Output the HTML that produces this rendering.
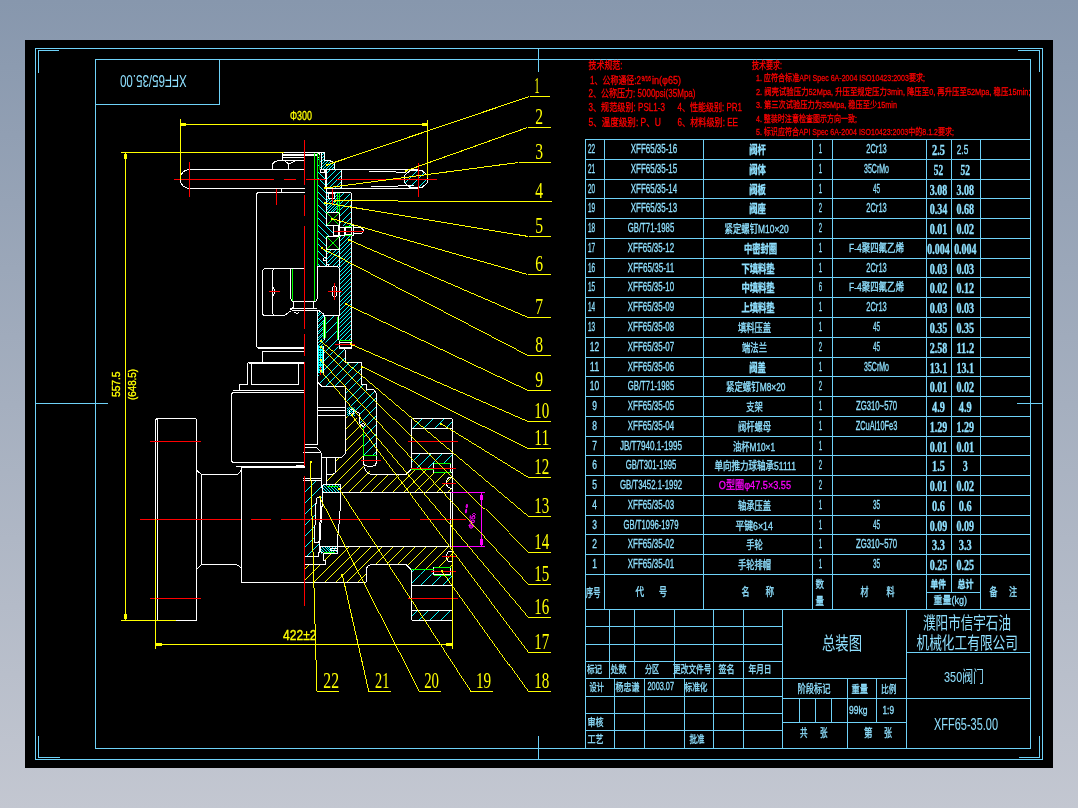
<!DOCTYPE html>
<html lang="zh"><head><meta charset="utf-8"><title>XFF65-35.00 总装图</title>
<style>
html,body{margin:0;padding:0;width:1078px;height:808px;overflow:hidden;background:#a3adbf}
svg{display:block;font-family:"Liberation Sans", "Noto Sans CJK SC", sans-serif}
body{will-change:transform}
</style></head><body>
<svg width="1078" height="808" viewBox="0 0 1078 808" shape-rendering="crispEdges">
<defs><linearGradient id="bg" x1="0" y1="0" x2="0" y2="1"><stop offset="0" stop-color="#8797ad"/><stop offset="1" stop-color="#c3c7d1"/></linearGradient></defs>
<rect x="0" y="0" width="1078" height="808" fill="url(#bg)"/>
<rect x="25" y="40" width="1028" height="728" rx="1.5" fill="#000"/>
<g id="frame">
<rect x="35.5" y="48.5" width="1007" height="711" fill="none" stroke="#6fd2f8"/>
<rect x="95.5" y="59.5" width="935" height="689" fill="none" stroke="#6fd2f8"/>
<line x1="95" y1="104.5" x2="220" y2="104.5" stroke="#6fd2f8" stroke-width="1" />
<line x1="219.5" y1="59" x2="219.5" y2="105" stroke="#6fd2f8" stroke-width="1" />
<line x1="38" y1="50.5" x2="59" y2="50.5" stroke="#6fd2f8" stroke-width="1" />
<line x1="38.5" y1="50" x2="38.5" y2="73" stroke="#6fd2f8" stroke-width="1" />
<line x1="1019" y1="757.5" x2="1040" y2="757.5" stroke="#6fd2f8" stroke-width="1" />
<line x1="1039.5" y1="736" x2="1039.5" y2="758" stroke="#6fd2f8" stroke-width="1" />
<line x1="1018" y1="50.5" x2="1040" y2="50.5" stroke="#6fd2f8" stroke-width="1" />
<line x1="1039.5" y1="50" x2="1039.5" y2="72" stroke="#6fd2f8" stroke-width="1" />
<line x1="538.5" y1="48" x2="538.5" y2="72" stroke="#6fd2f8" stroke-width="1" />
<line x1="35" y1="403.5" x2="108" y2="403.5" stroke="#6fd2f8" stroke-width="1" />
<line x1="1017" y1="403.5" x2="1042" y2="403.5" stroke="#6fd2f8" stroke-width="1" />
</g>
<g id="frame2">
<line x1="38" y1="757.5" x2="60" y2="757.5" stroke="#6fd2f8" stroke-width="1" />
<line x1="38.5" y1="736" x2="38.5" y2="758" stroke="#6fd2f8" stroke-width="1" />
<line x1="538.5" y1="736" x2="538.5" y2="759" stroke="#6fd2f8" stroke-width="1" />
</g>
<g id="table">
<line x1="585" y1="139.5" x2="1031" y2="139.5" stroke="#6fd2f8" stroke-width="1" />
<line x1="585" y1="159.5" x2="1031" y2="159.5" stroke="#6fd2f8" stroke-width="1" />
<line x1="585" y1="179.5" x2="1031" y2="179.5" stroke="#6fd2f8" stroke-width="1" />
<line x1="585" y1="198.5" x2="1031" y2="198.5" stroke="#6fd2f8" stroke-width="1" />
<line x1="585" y1="218.5" x2="1031" y2="218.5" stroke="#6fd2f8" stroke-width="1" />
<line x1="585" y1="238.5" x2="1031" y2="238.5" stroke="#6fd2f8" stroke-width="1" />
<line x1="585" y1="258.5" x2="1031" y2="258.5" stroke="#6fd2f8" stroke-width="1" />
<line x1="585" y1="277.5" x2="1031" y2="277.5" stroke="#6fd2f8" stroke-width="1" />
<line x1="585" y1="297.5" x2="1031" y2="297.5" stroke="#6fd2f8" stroke-width="1" />
<line x1="585" y1="317.5" x2="1031" y2="317.5" stroke="#6fd2f8" stroke-width="1" />
<line x1="585" y1="337.5" x2="1031" y2="337.5" stroke="#6fd2f8" stroke-width="1" />
<line x1="585" y1="357.5" x2="1031" y2="357.5" stroke="#6fd2f8" stroke-width="1" />
<line x1="585" y1="376.5" x2="1031" y2="376.5" stroke="#6fd2f8" stroke-width="1" />
<line x1="585" y1="396.5" x2="1031" y2="396.5" stroke="#6fd2f8" stroke-width="1" />
<line x1="585" y1="416.5" x2="1031" y2="416.5" stroke="#6fd2f8" stroke-width="1" />
<line x1="585" y1="436.5" x2="1031" y2="436.5" stroke="#6fd2f8" stroke-width="1" />
<line x1="585" y1="455.5" x2="1031" y2="455.5" stroke="#6fd2f8" stroke-width="1" />
<line x1="585" y1="475.5" x2="1031" y2="475.5" stroke="#6fd2f8" stroke-width="1" />
<line x1="585" y1="495.5" x2="1031" y2="495.5" stroke="#6fd2f8" stroke-width="1" />
<line x1="585" y1="515.5" x2="1031" y2="515.5" stroke="#6fd2f8" stroke-width="1" />
<line x1="585" y1="534.5" x2="1031" y2="534.5" stroke="#6fd2f8" stroke-width="1" />
<line x1="585" y1="554.5" x2="1031" y2="554.5" stroke="#6fd2f8" stroke-width="1" />
<line x1="585" y1="574.5" x2="1031" y2="574.5" stroke="#6fd2f8" stroke-width="1" />
<line x1="585.5" y1="139" x2="585.5" y2="609" stroke="#6fd2f8" stroke-width="1" />
<line x1="604.5" y1="139" x2="604.5" y2="609" stroke="#6fd2f8" stroke-width="1" />
<line x1="703.5" y1="139" x2="703.5" y2="609" stroke="#6fd2f8" stroke-width="1" />
<line x1="812.5" y1="139" x2="812.5" y2="609" stroke="#6fd2f8" stroke-width="1" />
<line x1="832.5" y1="139" x2="832.5" y2="609" stroke="#6fd2f8" stroke-width="1" />
<line x1="926.5" y1="139" x2="926.5" y2="609" stroke="#6fd2f8" stroke-width="1" />
<line x1="951.5" y1="139" x2="951.5" y2="609" stroke="#6fd2f8" stroke-width="1" />
<line x1="980.5" y1="139" x2="980.5" y2="609" stroke="#6fd2f8" stroke-width="1" />
<line x1="585" y1="609.5" x2="1031" y2="609.5" stroke="#6fd2f8" stroke-width="1" />
<rect x="950" y="593" width="3" height="16" fill="#000"/>
<line x1="926" y1="592.5" x2="981" y2="592.5" stroke="#6fd2f8" stroke-width="1" />
<text x="588" y="153" font-size="12.4" fill="#8fe0ff" stroke="#8fe0ff" stroke-width="0.3" text-anchor="start" textLength="7.2" lengthAdjust="spacingAndGlyphs" >22</text>
<text x="630.79" y="153" font-size="12.4" fill="#8fe0ff" stroke="#8fe0ff" stroke-width="0.3" text-anchor="start" textLength="46.419999999999995" lengthAdjust="spacingAndGlyphs" >XFF65/35-16</text>
<text x="749.3000000000001" y="153.5" font-size="10.912" fill="#8fe0ff" stroke="#8fe0ff" stroke-width="0.3" text-anchor="start" textLength="16.6" lengthAdjust="spacingAndGlyphs" font-weight="bold" >阀杆</text>
<text x="818.85" y="153" font-size="12.4" fill="#8fe0ff" stroke="#8fe0ff" stroke-width="0.3" text-anchor="start" textLength="3.3" lengthAdjust="spacingAndGlyphs" >1</text>
<text x="866.25" y="153" font-size="12.4" fill="#8fe0ff" stroke="#8fe0ff" stroke-width="0.3" text-anchor="start" textLength="20.5" lengthAdjust="spacingAndGlyphs" >2Cr13</text>
<text x="932.0375" y="155.3" font-size="13.6" fill="#8fe0ff" stroke="#8fe0ff" stroke-width="0.3" text-anchor="start" textLength="12.925" lengthAdjust="spacingAndGlyphs" font-weight="bold" font-family="Liberation Serif, serif">2.5</text>
<text x="956.75" y="154" font-size="12.4" fill="#8fe0ff" stroke="#8fe0ff" stroke-width="0.3" text-anchor="start" textLength="11.5" lengthAdjust="spacingAndGlyphs" >2.5</text>
<text x="588" y="173" font-size="12.4" fill="#8fe0ff" stroke="#8fe0ff" stroke-width="0.3" text-anchor="start" textLength="7.2" lengthAdjust="spacingAndGlyphs" >21</text>
<text x="630.79" y="173" font-size="12.4" fill="#8fe0ff" stroke="#8fe0ff" stroke-width="0.3" text-anchor="start" textLength="46.419999999999995" lengthAdjust="spacingAndGlyphs" >XFF65/35-15</text>
<text x="749.3000000000001" y="173.5" font-size="10.912" fill="#8fe0ff" stroke="#8fe0ff" stroke-width="0.3" text-anchor="start" textLength="16.6" lengthAdjust="spacingAndGlyphs" font-weight="bold" >阀体</text>
<text x="818.85" y="173" font-size="12.4" fill="#8fe0ff" stroke="#8fe0ff" stroke-width="0.3" text-anchor="start" textLength="3.3" lengthAdjust="spacingAndGlyphs" >1</text>
<text x="864.0" y="173" font-size="12.4" fill="#8fe0ff" stroke="#8fe0ff" stroke-width="0.3" text-anchor="start" textLength="25" lengthAdjust="spacingAndGlyphs" >35CrMo</text>
<text x="933.8" y="175.3" font-size="13.6" fill="#8fe0ff" stroke="#8fe0ff" stroke-width="0.3" text-anchor="start" textLength="9.4" lengthAdjust="spacingAndGlyphs" font-weight="bold" font-family="Liberation Serif, serif">52</text>
<text x="960.5999999999999" y="175.3" font-size="13.6" fill="#8fe0ff" stroke="#8fe0ff" stroke-width="0.3" text-anchor="start" textLength="9.4" lengthAdjust="spacingAndGlyphs" font-weight="bold" font-family="Liberation Serif, serif">52</text>
<text x="588" y="193" font-size="12.4" fill="#8fe0ff" stroke="#8fe0ff" stroke-width="0.3" text-anchor="start" textLength="7.2" lengthAdjust="spacingAndGlyphs" >20</text>
<text x="630.79" y="193" font-size="12.4" fill="#8fe0ff" stroke="#8fe0ff" stroke-width="0.3" text-anchor="start" textLength="46.419999999999995" lengthAdjust="spacingAndGlyphs" >XFF65/35-14</text>
<text x="749.3000000000001" y="193.5" font-size="10.912" fill="#8fe0ff" stroke="#8fe0ff" stroke-width="0.3" text-anchor="start" textLength="16.6" lengthAdjust="spacingAndGlyphs" font-weight="bold" >阀板</text>
<text x="818.85" y="193" font-size="12.4" fill="#8fe0ff" stroke="#8fe0ff" stroke-width="0.3" text-anchor="start" textLength="3.3" lengthAdjust="spacingAndGlyphs" >1</text>
<text x="873.0" y="193" font-size="12.4" fill="#8fe0ff" stroke="#8fe0ff" stroke-width="0.3" text-anchor="start" textLength="7" lengthAdjust="spacingAndGlyphs" >45</text>
<text x="929.6875" y="195.3" font-size="13.6" fill="#8fe0ff" stroke="#8fe0ff" stroke-width="0.3" text-anchor="start" textLength="17.625" lengthAdjust="spacingAndGlyphs" font-weight="bold" font-family="Liberation Serif, serif">3.08</text>
<text x="956.4875" y="195.3" font-size="13.6" fill="#8fe0ff" stroke="#8fe0ff" stroke-width="0.3" text-anchor="start" textLength="17.625" lengthAdjust="spacingAndGlyphs" font-weight="bold" font-family="Liberation Serif, serif">3.08</text>
<text x="588" y="212" font-size="12.4" fill="#8fe0ff" stroke="#8fe0ff" stroke-width="0.3" text-anchor="start" textLength="7.2" lengthAdjust="spacingAndGlyphs" >19</text>
<text x="630.79" y="212" font-size="12.4" fill="#8fe0ff" stroke="#8fe0ff" stroke-width="0.3" text-anchor="start" textLength="46.419999999999995" lengthAdjust="spacingAndGlyphs" >XFF65/35-13</text>
<text x="749.3000000000001" y="212.5" font-size="10.912" fill="#8fe0ff" stroke="#8fe0ff" stroke-width="0.3" text-anchor="start" textLength="16.6" lengthAdjust="spacingAndGlyphs" font-weight="bold" >阀座</text>
<text x="818.85" y="212" font-size="12.4" fill="#8fe0ff" stroke="#8fe0ff" stroke-width="0.3" text-anchor="start" textLength="3.3" lengthAdjust="spacingAndGlyphs" >2</text>
<text x="866.25" y="212" font-size="12.4" fill="#8fe0ff" stroke="#8fe0ff" stroke-width="0.3" text-anchor="start" textLength="20.5" lengthAdjust="spacingAndGlyphs" >2Cr13</text>
<text x="929.6875" y="214.3" font-size="13.6" fill="#8fe0ff" stroke="#8fe0ff" stroke-width="0.3" text-anchor="start" textLength="17.625" lengthAdjust="spacingAndGlyphs" font-weight="bold" font-family="Liberation Serif, serif">0.34</text>
<text x="956.4875" y="214.3" font-size="13.6" fill="#8fe0ff" stroke="#8fe0ff" stroke-width="0.3" text-anchor="start" textLength="17.625" lengthAdjust="spacingAndGlyphs" font-weight="bold" font-family="Liberation Serif, serif">0.68</text>
<text x="588" y="232" font-size="12.4" fill="#8fe0ff" stroke="#8fe0ff" stroke-width="0.3" text-anchor="start" textLength="7.2" lengthAdjust="spacingAndGlyphs" >18</text>
<text x="627.79" y="232" font-size="12.4" fill="#8fe0ff" stroke="#8fe0ff" stroke-width="0.3" text-anchor="start" textLength="46.419999999999995" lengthAdjust="spacingAndGlyphs" >GB/T71-1985</text>
<text x="724.5" y="232.5" font-size="10.912" fill="#8fe0ff" stroke="#8fe0ff" stroke-width="0.3" text-anchor="start" textLength="64.2" lengthAdjust="spacingAndGlyphs" >紧定螺钉M10×20</text>
<text x="818.85" y="232" font-size="12.4" fill="#8fe0ff" stroke="#8fe0ff" stroke-width="0.3" text-anchor="start" textLength="3.3" lengthAdjust="spacingAndGlyphs" >2</text>
<text x="929.6875" y="234.3" font-size="13.6" fill="#8fe0ff" stroke="#8fe0ff" stroke-width="0.3" text-anchor="start" textLength="17.625" lengthAdjust="spacingAndGlyphs" font-weight="bold" font-family="Liberation Serif, serif">0.01</text>
<text x="956.4875" y="234.3" font-size="13.6" fill="#8fe0ff" stroke="#8fe0ff" stroke-width="0.3" text-anchor="start" textLength="17.625" lengthAdjust="spacingAndGlyphs" font-weight="bold" font-family="Liberation Serif, serif">0.02</text>
<text x="588" y="252" font-size="12.4" fill="#8fe0ff" stroke="#8fe0ff" stroke-width="0.3" text-anchor="start" textLength="7.2" lengthAdjust="spacingAndGlyphs" >17</text>
<text x="627.79" y="252" font-size="12.4" fill="#8fe0ff" stroke="#8fe0ff" stroke-width="0.3" text-anchor="start" textLength="46.419999999999995" lengthAdjust="spacingAndGlyphs" >XFF65/35-12</text>
<text x="743.9" y="252.5" font-size="10.912" fill="#8fe0ff" stroke="#8fe0ff" stroke-width="0.3" text-anchor="start" textLength="33.2" lengthAdjust="spacingAndGlyphs" font-weight="bold" >中密封圈</text>
<text x="818.85" y="252" font-size="12.4" fill="#8fe0ff" stroke="#8fe0ff" stroke-width="0.3" text-anchor="start" textLength="3.3" lengthAdjust="spacingAndGlyphs" >1</text>
<text x="849.0" y="252" font-size="11.16" fill="#8fe0ff" stroke="#8fe0ff" stroke-width="0.3" text-anchor="start" textLength="55" lengthAdjust="spacingAndGlyphs" >F-4聚四氟乙烯</text>
<text x="927.3375" y="254.3" font-size="13.6" fill="#8fe0ff" stroke="#8fe0ff" stroke-width="0.3" text-anchor="start" textLength="22.325" lengthAdjust="spacingAndGlyphs" font-weight="bold" font-family="Liberation Serif, serif">0.004</text>
<text x="954.1374999999999" y="254.3" font-size="13.6" fill="#8fe0ff" stroke="#8fe0ff" stroke-width="0.3" text-anchor="start" textLength="22.325" lengthAdjust="spacingAndGlyphs" font-weight="bold" font-family="Liberation Serif, serif">0.004</text>
<text x="588" y="272" font-size="12.4" fill="#8fe0ff" stroke="#8fe0ff" stroke-width="0.3" text-anchor="start" textLength="7.2" lengthAdjust="spacingAndGlyphs" >16</text>
<text x="627.79" y="272" font-size="12.4" fill="#8fe0ff" stroke="#8fe0ff" stroke-width="0.3" text-anchor="start" textLength="46.419999999999995" lengthAdjust="spacingAndGlyphs" >XFF65/35-11</text>
<text x="741.4" y="272.5" font-size="10.912" fill="#8fe0ff" stroke="#8fe0ff" stroke-width="0.3" text-anchor="start" textLength="33.2" lengthAdjust="spacingAndGlyphs" font-weight="bold" >下填料垫</text>
<text x="818.85" y="272" font-size="12.4" fill="#8fe0ff" stroke="#8fe0ff" stroke-width="0.3" text-anchor="start" textLength="3.3" lengthAdjust="spacingAndGlyphs" >1</text>
<text x="866.25" y="272" font-size="12.4" fill="#8fe0ff" stroke="#8fe0ff" stroke-width="0.3" text-anchor="start" textLength="20.5" lengthAdjust="spacingAndGlyphs" >2Cr13</text>
<text x="929.6875" y="274.3" font-size="13.6" fill="#8fe0ff" stroke="#8fe0ff" stroke-width="0.3" text-anchor="start" textLength="17.625" lengthAdjust="spacingAndGlyphs" font-weight="bold" font-family="Liberation Serif, serif">0.03</text>
<text x="956.4875" y="274.3" font-size="13.6" fill="#8fe0ff" stroke="#8fe0ff" stroke-width="0.3" text-anchor="start" textLength="17.625" lengthAdjust="spacingAndGlyphs" font-weight="bold" font-family="Liberation Serif, serif">0.03</text>
<text x="588" y="291" font-size="12.4" fill="#8fe0ff" stroke="#8fe0ff" stroke-width="0.3" text-anchor="start" textLength="7.2" lengthAdjust="spacingAndGlyphs" >15</text>
<text x="627.79" y="291" font-size="12.4" fill="#8fe0ff" stroke="#8fe0ff" stroke-width="0.3" text-anchor="start" textLength="46.419999999999995" lengthAdjust="spacingAndGlyphs" >XFF65/35-10</text>
<text x="741.4" y="291.5" font-size="10.912" fill="#8fe0ff" stroke="#8fe0ff" stroke-width="0.3" text-anchor="start" textLength="33.2" lengthAdjust="spacingAndGlyphs" font-weight="bold" >中填料垫</text>
<text x="818.85" y="291" font-size="12.4" fill="#8fe0ff" stroke="#8fe0ff" stroke-width="0.3" text-anchor="start" textLength="3.3" lengthAdjust="spacingAndGlyphs" >6</text>
<text x="849.0" y="291" font-size="11.16" fill="#8fe0ff" stroke="#8fe0ff" stroke-width="0.3" text-anchor="start" textLength="55" lengthAdjust="spacingAndGlyphs" >F-4聚四氟乙烯</text>
<text x="929.6875" y="293.3" font-size="13.6" fill="#8fe0ff" stroke="#8fe0ff" stroke-width="0.3" text-anchor="start" textLength="17.625" lengthAdjust="spacingAndGlyphs" font-weight="bold" font-family="Liberation Serif, serif">0.02</text>
<text x="956.4875" y="293.3" font-size="13.6" fill="#8fe0ff" stroke="#8fe0ff" stroke-width="0.3" text-anchor="start" textLength="17.625" lengthAdjust="spacingAndGlyphs" font-weight="bold" font-family="Liberation Serif, serif">0.12</text>
<text x="588" y="311" font-size="12.4" fill="#8fe0ff" stroke="#8fe0ff" stroke-width="0.3" text-anchor="start" textLength="7.2" lengthAdjust="spacingAndGlyphs" >14</text>
<text x="627.79" y="311" font-size="12.4" fill="#8fe0ff" stroke="#8fe0ff" stroke-width="0.3" text-anchor="start" textLength="46.419999999999995" lengthAdjust="spacingAndGlyphs" >XFF65/35-09</text>
<text x="741.4" y="311.5" font-size="10.912" fill="#8fe0ff" stroke="#8fe0ff" stroke-width="0.3" text-anchor="start" textLength="33.2" lengthAdjust="spacingAndGlyphs" font-weight="bold" >上填料垫</text>
<text x="818.85" y="311" font-size="12.4" fill="#8fe0ff" stroke="#8fe0ff" stroke-width="0.3" text-anchor="start" textLength="3.3" lengthAdjust="spacingAndGlyphs" >1</text>
<text x="866.25" y="311" font-size="12.4" fill="#8fe0ff" stroke="#8fe0ff" stroke-width="0.3" text-anchor="start" textLength="20.5" lengthAdjust="spacingAndGlyphs" >2Cr13</text>
<text x="929.6875" y="313.3" font-size="13.6" fill="#8fe0ff" stroke="#8fe0ff" stroke-width="0.3" text-anchor="start" textLength="17.625" lengthAdjust="spacingAndGlyphs" font-weight="bold" font-family="Liberation Serif, serif">0.03</text>
<text x="956.4875" y="313.3" font-size="13.6" fill="#8fe0ff" stroke="#8fe0ff" stroke-width="0.3" text-anchor="start" textLength="17.625" lengthAdjust="spacingAndGlyphs" font-weight="bold" font-family="Liberation Serif, serif">0.03</text>
<text x="588" y="331" font-size="12.4" fill="#8fe0ff" stroke="#8fe0ff" stroke-width="0.3" text-anchor="start" textLength="7.2" lengthAdjust="spacingAndGlyphs" >13</text>
<text x="627.79" y="331" font-size="12.4" fill="#8fe0ff" stroke="#8fe0ff" stroke-width="0.3" text-anchor="start" textLength="46.419999999999995" lengthAdjust="spacingAndGlyphs" >XFF65/35-08</text>
<text x="737.9" y="331.5" font-size="10.912" fill="#8fe0ff" stroke="#8fe0ff" stroke-width="0.3" text-anchor="start" textLength="33.2" lengthAdjust="spacingAndGlyphs" >填料压盖</text>
<text x="818.85" y="331" font-size="12.4" fill="#8fe0ff" stroke="#8fe0ff" stroke-width="0.3" text-anchor="start" textLength="3.3" lengthAdjust="spacingAndGlyphs" >1</text>
<text x="873.0" y="331" font-size="12.4" fill="#8fe0ff" stroke="#8fe0ff" stroke-width="0.3" text-anchor="start" textLength="7" lengthAdjust="spacingAndGlyphs" >45</text>
<text x="929.6875" y="333.3" font-size="13.6" fill="#8fe0ff" stroke="#8fe0ff" stroke-width="0.3" text-anchor="start" textLength="17.625" lengthAdjust="spacingAndGlyphs" font-weight="bold" font-family="Liberation Serif, serif">0.35</text>
<text x="956.4875" y="333.3" font-size="13.6" fill="#8fe0ff" stroke="#8fe0ff" stroke-width="0.3" text-anchor="start" textLength="17.625" lengthAdjust="spacingAndGlyphs" font-weight="bold" font-family="Liberation Serif, serif">0.35</text>
<text x="589.8" y="351" font-size="12.4" fill="#8fe0ff" stroke="#8fe0ff" stroke-width="0.3" text-anchor="start" textLength="9.4" lengthAdjust="spacingAndGlyphs" >12</text>
<text x="627.79" y="351" font-size="12.4" fill="#8fe0ff" stroke="#8fe0ff" stroke-width="0.3" text-anchor="start" textLength="46.419999999999995" lengthAdjust="spacingAndGlyphs" >XFF65/35-07</text>
<text x="742.05" y="351.5" font-size="10.912" fill="#8fe0ff" stroke="#8fe0ff" stroke-width="0.3" text-anchor="start" textLength="24.900000000000002" lengthAdjust="spacingAndGlyphs" >端法兰</text>
<text x="818.85" y="351" font-size="12.4" fill="#8fe0ff" stroke="#8fe0ff" stroke-width="0.3" text-anchor="start" textLength="3.3" lengthAdjust="spacingAndGlyphs" >2</text>
<text x="873.0" y="351" font-size="12.4" fill="#8fe0ff" stroke="#8fe0ff" stroke-width="0.3" text-anchor="start" textLength="7" lengthAdjust="spacingAndGlyphs" >45</text>
<text x="929.6875" y="353.3" font-size="13.6" fill="#8fe0ff" stroke="#8fe0ff" stroke-width="0.3" text-anchor="start" textLength="17.625" lengthAdjust="spacingAndGlyphs" font-weight="bold" font-family="Liberation Serif, serif">2.58</text>
<text x="956.4875" y="353.3" font-size="13.6" fill="#8fe0ff" stroke="#8fe0ff" stroke-width="0.3" text-anchor="start" textLength="17.625" lengthAdjust="spacingAndGlyphs" font-weight="bold" font-family="Liberation Serif, serif">11.2</text>
<text x="589.8" y="371" font-size="12.4" fill="#8fe0ff" stroke="#8fe0ff" stroke-width="0.3" text-anchor="start" textLength="9.4" lengthAdjust="spacingAndGlyphs" >11</text>
<text x="627.79" y="371" font-size="12.4" fill="#8fe0ff" stroke="#8fe0ff" stroke-width="0.3" text-anchor="start" textLength="46.419999999999995" lengthAdjust="spacingAndGlyphs" >XFF65/35-06</text>
<text x="749.3000000000001" y="371.5" font-size="10.912" fill="#8fe0ff" stroke="#8fe0ff" stroke-width="0.3" text-anchor="start" textLength="16.6" lengthAdjust="spacingAndGlyphs" font-weight="bold" >阀盖</text>
<text x="818.85" y="371" font-size="12.4" fill="#8fe0ff" stroke="#8fe0ff" stroke-width="0.3" text-anchor="start" textLength="3.3" lengthAdjust="spacingAndGlyphs" >1</text>
<text x="864.0" y="371" font-size="12.4" fill="#8fe0ff" stroke="#8fe0ff" stroke-width="0.3" text-anchor="start" textLength="25" lengthAdjust="spacingAndGlyphs" >35CrMo</text>
<text x="929.6875" y="373.3" font-size="13.6" fill="#8fe0ff" stroke="#8fe0ff" stroke-width="0.3" text-anchor="start" textLength="17.625" lengthAdjust="spacingAndGlyphs" font-weight="bold" font-family="Liberation Serif, serif">13.1</text>
<text x="956.4875" y="373.3" font-size="13.6" fill="#8fe0ff" stroke="#8fe0ff" stroke-width="0.3" text-anchor="start" textLength="17.625" lengthAdjust="spacingAndGlyphs" font-weight="bold" font-family="Liberation Serif, serif">13.1</text>
<text x="589.8" y="390" font-size="12.4" fill="#8fe0ff" stroke="#8fe0ff" stroke-width="0.3" text-anchor="start" textLength="9.4" lengthAdjust="spacingAndGlyphs" >10</text>
<text x="627.79" y="390" font-size="12.4" fill="#8fe0ff" stroke="#8fe0ff" stroke-width="0.3" text-anchor="start" textLength="46.419999999999995" lengthAdjust="spacingAndGlyphs" >GB/T71-1985</text>
<text x="726.05" y="390.5" font-size="10.912" fill="#8fe0ff" stroke="#8fe0ff" stroke-width="0.3" text-anchor="start" textLength="59.5" lengthAdjust="spacingAndGlyphs" >紧定螺钉M8×20</text>
<text x="818.85" y="390" font-size="12.4" fill="#8fe0ff" stroke="#8fe0ff" stroke-width="0.3" text-anchor="start" textLength="3.3" lengthAdjust="spacingAndGlyphs" >2</text>
<text x="929.6875" y="392.3" font-size="13.6" fill="#8fe0ff" stroke="#8fe0ff" stroke-width="0.3" text-anchor="start" textLength="17.625" lengthAdjust="spacingAndGlyphs" font-weight="bold" font-family="Liberation Serif, serif">0.01</text>
<text x="956.4875" y="392.3" font-size="13.6" fill="#8fe0ff" stroke="#8fe0ff" stroke-width="0.3" text-anchor="start" textLength="17.625" lengthAdjust="spacingAndGlyphs" font-weight="bold" font-family="Liberation Serif, serif">0.02</text>
<text x="592.15" y="410" font-size="12.4" fill="#8fe0ff" stroke="#8fe0ff" stroke-width="0.3" text-anchor="start" textLength="4.7" lengthAdjust="spacingAndGlyphs" >9</text>
<text x="627.79" y="410" font-size="12.4" fill="#8fe0ff" stroke="#8fe0ff" stroke-width="0.3" text-anchor="start" textLength="46.419999999999995" lengthAdjust="spacingAndGlyphs" >XFF65/35-05</text>
<text x="746.2" y="410.5" font-size="10.912" fill="#8fe0ff" stroke="#8fe0ff" stroke-width="0.3" text-anchor="start" textLength="16.6" lengthAdjust="spacingAndGlyphs" >支架</text>
<text x="818.85" y="410" font-size="12.4" fill="#8fe0ff" stroke="#8fe0ff" stroke-width="0.3" text-anchor="start" textLength="3.3" lengthAdjust="spacingAndGlyphs" >1</text>
<text x="855.9" y="410" font-size="12.4" fill="#8fe0ff" stroke="#8fe0ff" stroke-width="0.3" text-anchor="start" textLength="41.2" lengthAdjust="spacingAndGlyphs" >ZG310~570</text>
<text x="932.0375" y="412.3" font-size="13.6" fill="#8fe0ff" stroke="#8fe0ff" stroke-width="0.3" text-anchor="start" textLength="12.925" lengthAdjust="spacingAndGlyphs" font-weight="bold" font-family="Liberation Serif, serif">4.9</text>
<text x="958.8375" y="412.3" font-size="13.6" fill="#8fe0ff" stroke="#8fe0ff" stroke-width="0.3" text-anchor="start" textLength="12.925" lengthAdjust="spacingAndGlyphs" font-weight="bold" font-family="Liberation Serif, serif">4.9</text>
<text x="592.15" y="430" font-size="12.4" fill="#8fe0ff" stroke="#8fe0ff" stroke-width="0.3" text-anchor="start" textLength="4.7" lengthAdjust="spacingAndGlyphs" >8</text>
<text x="627.79" y="430" font-size="12.4" fill="#8fe0ff" stroke="#8fe0ff" stroke-width="0.3" text-anchor="start" textLength="46.419999999999995" lengthAdjust="spacingAndGlyphs" >XFF65/35-04</text>
<text x="737.9" y="430.5" font-size="10.912" fill="#8fe0ff" stroke="#8fe0ff" stroke-width="0.3" text-anchor="start" textLength="33.2" lengthAdjust="spacingAndGlyphs" >阀杆螺母</text>
<text x="818.85" y="430" font-size="12.4" fill="#8fe0ff" stroke="#8fe0ff" stroke-width="0.3" text-anchor="start" textLength="3.3" lengthAdjust="spacingAndGlyphs" >1</text>
<text x="855.65" y="430" font-size="12.4" fill="#8fe0ff" stroke="#8fe0ff" stroke-width="0.3" text-anchor="start" textLength="41.7" lengthAdjust="spacingAndGlyphs" >ZCuAl10Fe3</text>
<text x="929.6875" y="432.3" font-size="13.6" fill="#8fe0ff" stroke="#8fe0ff" stroke-width="0.3" text-anchor="start" textLength="17.625" lengthAdjust="spacingAndGlyphs" font-weight="bold" font-family="Liberation Serif, serif">1.29</text>
<text x="956.4875" y="432.3" font-size="13.6" fill="#8fe0ff" stroke="#8fe0ff" stroke-width="0.3" text-anchor="start" textLength="17.625" lengthAdjust="spacingAndGlyphs" font-weight="bold" font-family="Liberation Serif, serif">1.29</text>
<text x="592.15" y="450" font-size="12.4" fill="#8fe0ff" stroke="#8fe0ff" stroke-width="0.3" text-anchor="start" textLength="4.7" lengthAdjust="spacingAndGlyphs" >7</text>
<text x="619.8775" y="450" font-size="12.4" fill="#8fe0ff" stroke="#8fe0ff" stroke-width="0.3" text-anchor="start" textLength="62.24499999999999" lengthAdjust="spacingAndGlyphs" >JB/T7940.1-1995</text>
<text x="733.0" y="450.5" font-size="10.912" fill="#8fe0ff" stroke="#8fe0ff" stroke-width="0.3" text-anchor="start" textLength="42" lengthAdjust="spacingAndGlyphs" >油杯M10×1</text>
<text x="818.85" y="450" font-size="12.4" fill="#8fe0ff" stroke="#8fe0ff" stroke-width="0.3" text-anchor="start" textLength="3.3" lengthAdjust="spacingAndGlyphs" >1</text>
<text x="929.6875" y="452.3" font-size="13.6" fill="#8fe0ff" stroke="#8fe0ff" stroke-width="0.3" text-anchor="start" textLength="17.625" lengthAdjust="spacingAndGlyphs" font-weight="bold" font-family="Liberation Serif, serif">0.01</text>
<text x="956.4875" y="452.3" font-size="13.6" fill="#8fe0ff" stroke="#8fe0ff" stroke-width="0.3" text-anchor="start" textLength="17.625" lengthAdjust="spacingAndGlyphs" font-weight="bold" font-family="Liberation Serif, serif">0.01</text>
<text x="592.15" y="469" font-size="12.4" fill="#8fe0ff" stroke="#8fe0ff" stroke-width="0.3" text-anchor="start" textLength="4.7" lengthAdjust="spacingAndGlyphs" >6</text>
<text x="625.68" y="469" font-size="12.4" fill="#8fe0ff" stroke="#8fe0ff" stroke-width="0.3" text-anchor="start" textLength="50.63999999999999" lengthAdjust="spacingAndGlyphs" >GB/T301-1995</text>
<text x="714.45" y="469.5" font-size="10.912" fill="#8fe0ff" stroke="#8fe0ff" stroke-width="0.3" text-anchor="start" textLength="81.5" lengthAdjust="spacingAndGlyphs" >单向推力球轴承51111</text>
<text x="818.85" y="469" font-size="12.4" fill="#8fe0ff" stroke="#8fe0ff" stroke-width="0.3" text-anchor="start" textLength="3.3" lengthAdjust="spacingAndGlyphs" >2</text>
<text x="932.0375" y="471.3" font-size="13.6" fill="#8fe0ff" stroke="#8fe0ff" stroke-width="0.3" text-anchor="start" textLength="12.925" lengthAdjust="spacingAndGlyphs" font-weight="bold" font-family="Liberation Serif, serif">1.5</text>
<text x="962.9499999999999" y="471.3" font-size="13.6" fill="#8fe0ff" stroke="#8fe0ff" stroke-width="0.3" text-anchor="start" textLength="4.7" lengthAdjust="spacingAndGlyphs" font-weight="bold" font-family="Liberation Serif, serif">3</text>
<text x="592.15" y="489" font-size="12.4" fill="#8fe0ff" stroke="#8fe0ff" stroke-width="0.3" text-anchor="start" textLength="4.7" lengthAdjust="spacingAndGlyphs" >5</text>
<text x="619.8775" y="489" font-size="12.4" fill="#8fe0ff" stroke="#8fe0ff" stroke-width="0.3" text-anchor="start" textLength="62.24499999999999" lengthAdjust="spacingAndGlyphs" >GB/T3452.1-1992</text>
<text x="718.8" y="489" font-size="11.16" fill="#ff00ff" stroke="#ff00ff" stroke-width="0.3" text-anchor="start" textLength="72.2" lengthAdjust="spacingAndGlyphs" >O型圈φ47.5×3.55</text>
<text x="818.85" y="489" font-size="12.4" fill="#8fe0ff" stroke="#8fe0ff" stroke-width="0.3" text-anchor="start" textLength="3.3" lengthAdjust="spacingAndGlyphs" >2</text>
<text x="929.6875" y="491.3" font-size="13.6" fill="#8fe0ff" stroke="#8fe0ff" stroke-width="0.3" text-anchor="start" textLength="17.625" lengthAdjust="spacingAndGlyphs" font-weight="bold" font-family="Liberation Serif, serif">0.01</text>
<text x="956.4875" y="491.3" font-size="13.6" fill="#8fe0ff" stroke="#8fe0ff" stroke-width="0.3" text-anchor="start" textLength="17.625" lengthAdjust="spacingAndGlyphs" font-weight="bold" font-family="Liberation Serif, serif">0.02</text>
<text x="592.15" y="509" font-size="12.4" fill="#8fe0ff" stroke="#8fe0ff" stroke-width="0.3" text-anchor="start" textLength="4.7" lengthAdjust="spacingAndGlyphs" >4</text>
<text x="627.79" y="509" font-size="12.4" fill="#8fe0ff" stroke="#8fe0ff" stroke-width="0.3" text-anchor="start" textLength="46.419999999999995" lengthAdjust="spacingAndGlyphs" >XFF65/35-03</text>
<text x="737.9" y="509.5" font-size="10.912" fill="#8fe0ff" stroke="#8fe0ff" stroke-width="0.3" text-anchor="start" textLength="33.2" lengthAdjust="spacingAndGlyphs" >轴承压盖</text>
<text x="818.85" y="509" font-size="12.4" fill="#8fe0ff" stroke="#8fe0ff" stroke-width="0.3" text-anchor="start" textLength="3.3" lengthAdjust="spacingAndGlyphs" >1</text>
<text x="873.0" y="509" font-size="12.4" fill="#8fe0ff" stroke="#8fe0ff" stroke-width="0.3" text-anchor="start" textLength="7" lengthAdjust="spacingAndGlyphs" >35</text>
<text x="932.0375" y="511.3" font-size="13.6" fill="#8fe0ff" stroke="#8fe0ff" stroke-width="0.3" text-anchor="start" textLength="12.925" lengthAdjust="spacingAndGlyphs" font-weight="bold" font-family="Liberation Serif, serif">0.6</text>
<text x="958.8375" y="511.3" font-size="13.6" fill="#8fe0ff" stroke="#8fe0ff" stroke-width="0.3" text-anchor="start" textLength="12.925" lengthAdjust="spacingAndGlyphs" font-weight="bold" font-family="Liberation Serif, serif">0.6</text>
<text x="592.15" y="529" font-size="12.4" fill="#8fe0ff" stroke="#8fe0ff" stroke-width="0.3" text-anchor="start" textLength="4.7" lengthAdjust="spacingAndGlyphs" >3</text>
<text x="623.57" y="529" font-size="12.4" fill="#8fe0ff" stroke="#8fe0ff" stroke-width="0.3" text-anchor="start" textLength="54.85999999999999" lengthAdjust="spacingAndGlyphs" >GB/T1096-1979</text>
<text x="735.45" y="529.5" font-size="10.912" fill="#8fe0ff" stroke="#8fe0ff" stroke-width="0.3" text-anchor="start" textLength="37.5" lengthAdjust="spacingAndGlyphs" >平键6×14</text>
<text x="818.85" y="529" font-size="12.4" fill="#8fe0ff" stroke="#8fe0ff" stroke-width="0.3" text-anchor="start" textLength="3.3" lengthAdjust="spacingAndGlyphs" >1</text>
<text x="873.0" y="529" font-size="12.4" fill="#8fe0ff" stroke="#8fe0ff" stroke-width="0.3" text-anchor="start" textLength="7" lengthAdjust="spacingAndGlyphs" >45</text>
<text x="929.6875" y="531.3" font-size="13.6" fill="#8fe0ff" stroke="#8fe0ff" stroke-width="0.3" text-anchor="start" textLength="17.625" lengthAdjust="spacingAndGlyphs" font-weight="bold" font-family="Liberation Serif, serif">0.09</text>
<text x="956.4875" y="531.3" font-size="13.6" fill="#8fe0ff" stroke="#8fe0ff" stroke-width="0.3" text-anchor="start" textLength="17.625" lengthAdjust="spacingAndGlyphs" font-weight="bold" font-family="Liberation Serif, serif">0.09</text>
<text x="592.15" y="548" font-size="12.4" fill="#8fe0ff" stroke="#8fe0ff" stroke-width="0.3" text-anchor="start" textLength="4.7" lengthAdjust="spacingAndGlyphs" >2</text>
<text x="627.79" y="548" font-size="12.4" fill="#8fe0ff" stroke="#8fe0ff" stroke-width="0.3" text-anchor="start" textLength="46.419999999999995" lengthAdjust="spacingAndGlyphs" >XFF65/35-02</text>
<text x="746.2" y="548.5" font-size="10.912" fill="#8fe0ff" stroke="#8fe0ff" stroke-width="0.3" text-anchor="start" textLength="16.6" lengthAdjust="spacingAndGlyphs" >手轮</text>
<text x="818.85" y="548" font-size="12.4" fill="#8fe0ff" stroke="#8fe0ff" stroke-width="0.3" text-anchor="start" textLength="3.3" lengthAdjust="spacingAndGlyphs" >1</text>
<text x="855.9" y="548" font-size="12.4" fill="#8fe0ff" stroke="#8fe0ff" stroke-width="0.3" text-anchor="start" textLength="41.2" lengthAdjust="spacingAndGlyphs" >ZG310~570</text>
<text x="932.0375" y="550.3" font-size="13.6" fill="#8fe0ff" stroke="#8fe0ff" stroke-width="0.3" text-anchor="start" textLength="12.925" lengthAdjust="spacingAndGlyphs" font-weight="bold" font-family="Liberation Serif, serif">3.3</text>
<text x="958.8375" y="550.3" font-size="13.6" fill="#8fe0ff" stroke="#8fe0ff" stroke-width="0.3" text-anchor="start" textLength="12.925" lengthAdjust="spacingAndGlyphs" font-weight="bold" font-family="Liberation Serif, serif">3.3</text>
<text x="592.15" y="568" font-size="12.4" fill="#8fe0ff" stroke="#8fe0ff" stroke-width="0.3" text-anchor="start" textLength="4.7" lengthAdjust="spacingAndGlyphs" >1</text>
<text x="627.79" y="568" font-size="12.4" fill="#8fe0ff" stroke="#8fe0ff" stroke-width="0.3" text-anchor="start" textLength="46.419999999999995" lengthAdjust="spacingAndGlyphs" >XFF65/35-01</text>
<text x="737.9" y="568.5" font-size="10.912" fill="#8fe0ff" stroke="#8fe0ff" stroke-width="0.3" text-anchor="start" textLength="33.2" lengthAdjust="spacingAndGlyphs" >手轮排帽</text>
<text x="818.85" y="568" font-size="12.4" fill="#8fe0ff" stroke="#8fe0ff" stroke-width="0.3" text-anchor="start" textLength="3.3" lengthAdjust="spacingAndGlyphs" >1</text>
<text x="873.0" y="568" font-size="12.4" fill="#8fe0ff" stroke="#8fe0ff" stroke-width="0.3" text-anchor="start" textLength="7" lengthAdjust="spacingAndGlyphs" >35</text>
<text x="929.6875" y="570.3" font-size="13.6" fill="#8fe0ff" stroke="#8fe0ff" stroke-width="0.3" text-anchor="start" textLength="17.625" lengthAdjust="spacingAndGlyphs" font-weight="bold" font-family="Liberation Serif, serif">0.25</text>
<text x="956.4875" y="570.3" font-size="13.6" fill="#8fe0ff" stroke="#8fe0ff" stroke-width="0.3" text-anchor="start" textLength="17.625" lengthAdjust="spacingAndGlyphs" font-weight="bold" font-family="Liberation Serif, serif">0.25</text>
<text x="586" y="596.5" font-size="11.5" fill="#8fe0ff" stroke="#8fe0ff" stroke-width="0.3" text-anchor="start" textLength="14.5" lengthAdjust="spacingAndGlyphs" >序号</text>
<text x="635.5" y="595.5" font-size="11" fill="#8fe0ff" stroke="#8fe0ff" stroke-width="0.3" text-anchor="start" textLength="8.5" lengthAdjust="spacingAndGlyphs" >代</text>
<text x="659" y="595.5" font-size="11" fill="#8fe0ff" stroke="#8fe0ff" stroke-width="0.3" text-anchor="start" textLength="8" lengthAdjust="spacingAndGlyphs" >号</text>
<text x="741.5" y="595.5" font-size="11" fill="#8fe0ff" stroke="#8fe0ff" stroke-width="0.3" text-anchor="start" textLength="8" lengthAdjust="spacingAndGlyphs" >名</text>
<text x="765.5" y="595.5" font-size="11" fill="#8fe0ff" stroke="#8fe0ff" stroke-width="0.3" text-anchor="start" textLength="8.5" lengthAdjust="spacingAndGlyphs" >称</text>
<text x="815.5" y="588" font-size="10.5" fill="#8fe0ff" stroke="#8fe0ff" stroke-width="0.3" text-anchor="start" textLength="8.5" lengthAdjust="spacingAndGlyphs" >数</text>
<text x="815.5" y="604.5" font-size="10.5" fill="#8fe0ff" stroke="#8fe0ff" stroke-width="0.3" text-anchor="start" textLength="8.5" lengthAdjust="spacingAndGlyphs" >量</text>
<text x="860.5" y="596" font-size="11" fill="#8fe0ff" stroke="#8fe0ff" stroke-width="0.3" text-anchor="start" textLength="8" lengthAdjust="spacingAndGlyphs" >材</text>
<text x="886.5" y="596" font-size="11" fill="#8fe0ff" stroke="#8fe0ff" stroke-width="0.3" text-anchor="start" textLength="8" lengthAdjust="spacingAndGlyphs" >料</text>
<text x="930.5" y="588" font-size="10.5" fill="#8fe0ff" stroke="#8fe0ff" stroke-width="0.3" text-anchor="start" textLength="15.5" lengthAdjust="spacingAndGlyphs" font-weight="bold" >单件</text>
<text x="957.5" y="588" font-size="10.5" fill="#8fe0ff" stroke="#8fe0ff" stroke-width="0.3" text-anchor="start" textLength="16" lengthAdjust="spacingAndGlyphs" font-weight="bold" >总计</text>
<text x="933.5" y="604" font-size="10.5" fill="#8fe0ff" stroke="#8fe0ff" stroke-width="0.3" text-anchor="start" textLength="33.5" lengthAdjust="spacingAndGlyphs" >重量(kg)</text>
<text x="989.5" y="595.5" font-size="11" fill="#8fe0ff" stroke="#8fe0ff" stroke-width="0.3" text-anchor="start" textLength="8" lengthAdjust="spacingAndGlyphs" >备</text>
<text x="1009" y="595.5" font-size="11" fill="#8fe0ff" stroke="#8fe0ff" stroke-width="0.3" text-anchor="start" textLength="8" lengthAdjust="spacingAndGlyphs" >注</text>
</g>
<g id="titleblock">
<line x1="585" y1="626.5" x2="783" y2="626.5" stroke="#6fd2f8" stroke-width="1" />
<line x1="585" y1="644.5" x2="783" y2="644.5" stroke="#6fd2f8" stroke-width="1" />
<line x1="585" y1="661.5" x2="783" y2="661.5" stroke="#6fd2f8" stroke-width="1" />
<line x1="585" y1="678.5" x2="783" y2="678.5" stroke="#6fd2f8" stroke-width="1" />
<line x1="585" y1="696.5" x2="783" y2="696.5" stroke="#6fd2f8" stroke-width="1" />
<line x1="585" y1="713.5" x2="783" y2="713.5" stroke="#6fd2f8" stroke-width="1" />
<line x1="585" y1="730.5" x2="783" y2="730.5" stroke="#6fd2f8" stroke-width="1" />
<line x1="609.5" y1="609" x2="609.5" y2="679" stroke="#6fd2f8" stroke-width="1" />
<line x1="634.5" y1="609" x2="634.5" y2="679" stroke="#6fd2f8" stroke-width="1" />
<line x1="674.5" y1="609" x2="674.5" y2="679" stroke="#6fd2f8" stroke-width="1" />
<line x1="614.5" y1="678" x2="614.5" y2="749" stroke="#6fd2f8" stroke-width="1" />
<line x1="644.5" y1="678" x2="644.5" y2="749" stroke="#6fd2f8" stroke-width="1" />
<line x1="684.5" y1="678" x2="684.5" y2="749" stroke="#6fd2f8" stroke-width="1" />
<line x1="713.5" y1="609" x2="713.5" y2="749" stroke="#6fd2f8" stroke-width="1" />
<line x1="743.5" y1="609" x2="743.5" y2="749" stroke="#6fd2f8" stroke-width="1" />
<line x1="782.5" y1="609" x2="782.5" y2="749" stroke="#6fd2f8" stroke-width="1" />
<line x1="585.5" y1="609" x2="585.5" y2="749" stroke="#6fd2f8" stroke-width="1" />
<line x1="906.5" y1="609" x2="906.5" y2="749" stroke="#6fd2f8" stroke-width="1" />
<line x1="906" y1="652.5" x2="1031" y2="652.5" stroke="#6fd2f8" stroke-width="1" />
<line x1="782" y1="698.5" x2="1031" y2="698.5" stroke="#6fd2f8" stroke-width="1" />
<line x1="782" y1="678.5" x2="907" y2="678.5" stroke="#6fd2f8" stroke-width="1" />
<line x1="782" y1="722.5" x2="907" y2="722.5" stroke="#6fd2f8" stroke-width="1" />
<line x1="847.5" y1="678" x2="847.5" y2="749" stroke="#6fd2f8" stroke-width="1" />
<line x1="876.5" y1="678" x2="876.5" y2="723" stroke="#6fd2f8" stroke-width="1" />
<line x1="799.5" y1="698" x2="799.5" y2="723" stroke="#6fd2f8" stroke-width="1" />
<line x1="815.5" y1="698" x2="815.5" y2="723" stroke="#6fd2f8" stroke-width="1" />
<line x1="831.5" y1="698" x2="831.5" y2="723" stroke="#6fd2f8" stroke-width="1" />
<text x="587" y="673" font-size="10.5" fill="#8fe0ff" stroke="#8fe0ff" stroke-width="0.3" text-anchor="start" textLength="15" lengthAdjust="spacingAndGlyphs" >标记</text>
<text x="610.5" y="673" font-size="10.5" fill="#8fe0ff" stroke="#8fe0ff" stroke-width="0.3" text-anchor="start" textLength="16" lengthAdjust="spacingAndGlyphs" >处数</text>
<text x="645" y="673" font-size="10.5" fill="#8fe0ff" stroke="#8fe0ff" stroke-width="0.3" text-anchor="start" textLength="14" lengthAdjust="spacingAndGlyphs" >分区</text>
<text x="673" y="673" font-size="10.5" fill="#8fe0ff" stroke="#8fe0ff" stroke-width="0.3" text-anchor="start" textLength="38.5" lengthAdjust="spacingAndGlyphs" >更改文件号</text>
<text x="718.5" y="673" font-size="10.5" fill="#8fe0ff" stroke="#8fe0ff" stroke-width="0.3" text-anchor="start" textLength="16" lengthAdjust="spacingAndGlyphs" >签名</text>
<text x="748.5" y="673" font-size="10.5" fill="#8fe0ff" stroke="#8fe0ff" stroke-width="0.3" text-anchor="start" textLength="23" lengthAdjust="spacingAndGlyphs" >年月日</text>
<text x="589.5" y="690.5" font-size="10.5" fill="#8fe0ff" stroke="#8fe0ff" stroke-width="0.3" text-anchor="start" textLength="14.5" lengthAdjust="spacingAndGlyphs" >设计</text>
<text x="615.5" y="690.5" font-size="10.5" fill="#8fe0ff" stroke="#8fe0ff" stroke-width="0.3" text-anchor="start" textLength="24" lengthAdjust="spacingAndGlyphs" >杨忠谦</text>
<text x="647.5" y="690" font-size="11.5" fill="#8fe0ff" stroke="#8fe0ff" stroke-width="0.3" text-anchor="start" textLength="26.5" lengthAdjust="spacingAndGlyphs" >2003.07</text>
<text x="684.5" y="690.5" font-size="10.5" fill="#8fe0ff" stroke="#8fe0ff" stroke-width="0.3" text-anchor="start" textLength="23" lengthAdjust="spacingAndGlyphs" >标准化</text>
<text x="587.5" y="725.5" font-size="10.5" fill="#8fe0ff" stroke="#8fe0ff" stroke-width="0.3" text-anchor="start" textLength="16" lengthAdjust="spacingAndGlyphs" >审核</text>
<text x="587.5" y="742.5" font-size="10.5" fill="#8fe0ff" stroke="#8fe0ff" stroke-width="0.3" text-anchor="start" textLength="16" lengthAdjust="spacingAndGlyphs" >工艺</text>
<text x="689.5" y="742.5" font-size="10.5" fill="#8fe0ff" stroke="#8fe0ff" stroke-width="0.3" text-anchor="start" textLength="15" lengthAdjust="spacingAndGlyphs" >批准</text>
<text x="797.5" y="692.5" font-size="11" fill="#8fe0ff" stroke="#8fe0ff" stroke-width="0.3" text-anchor="start" textLength="33" lengthAdjust="spacingAndGlyphs" >阶段标记</text>
<text x="851.5" y="692.5" font-size="10.5" fill="#8fe0ff" stroke="#8fe0ff" stroke-width="0.3" text-anchor="start" textLength="16.5" lengthAdjust="spacingAndGlyphs" >重量</text>
<text x="881" y="692.5" font-size="10.5" fill="#8fe0ff" stroke="#8fe0ff" stroke-width="0.3" text-anchor="start" textLength="15.5" lengthAdjust="spacingAndGlyphs" >比例</text>
<text x="849" y="714" font-size="11.5" fill="#8fe0ff" stroke="#8fe0ff" stroke-width="0.3" text-anchor="start" textLength="18.5" lengthAdjust="spacingAndGlyphs" >99kg</text>
<text x="882.5" y="714" font-size="11.5" fill="#8fe0ff" stroke="#8fe0ff" stroke-width="0.3" text-anchor="start" textLength="11.5" lengthAdjust="spacingAndGlyphs" >1:9</text>
<text x="800" y="737" font-size="11.5" fill="#8fe0ff" stroke="#8fe0ff" stroke-width="0.3" text-anchor="start" textLength="7.5" lengthAdjust="spacingAndGlyphs" >共</text>
<text x="820" y="737" font-size="11.5" fill="#8fe0ff" stroke="#8fe0ff" stroke-width="0.3" text-anchor="start" textLength="7.5" lengthAdjust="spacingAndGlyphs" >张</text>
<text x="864" y="737" font-size="11.5" fill="#8fe0ff" stroke="#8fe0ff" stroke-width="0.3" text-anchor="start" textLength="8.5" lengthAdjust="spacingAndGlyphs" >第</text>
<text x="884" y="737" font-size="11.5" fill="#8fe0ff" stroke="#8fe0ff" stroke-width="0.3" text-anchor="start" textLength="8" lengthAdjust="spacingAndGlyphs" >张</text>
<text x="822" y="649.5" font-size="18" fill="#8fe0ff" text-anchor="start" textLength="40" lengthAdjust="spacingAndGlyphs" stroke="none">总装图</text>
<text x="923" y="629" font-size="17" fill="#8fe0ff" text-anchor="start" textLength="88" lengthAdjust="spacingAndGlyphs" stroke="none">濮阳市信宇石油</text>
<text x="916.5" y="649" font-size="17" fill="#8fe0ff" text-anchor="start" textLength="101.5" lengthAdjust="spacingAndGlyphs" stroke="none">机械化工有限公司</text>
<text x="944" y="682" font-size="15.5" fill="#8fe0ff" text-anchor="start" textLength="40" lengthAdjust="spacingAndGlyphs" stroke="none">350阀门</text>
<text x="934" y="729.5" font-size="17" fill="#8fe0ff" text-anchor="start" textLength="64" lengthAdjust="spacingAndGlyphs" stroke="none">XFF65-35.00</text>
<g transform="rotate(180 157.5 82)"><text x="128.3" y="89.3" font-size="15.6" fill="#8fe0ff" textLength="66.7" lengthAdjust="spacingAndGlyphs">XFF65/35.00</text></g>
</g>
<g id="notes">
<text x="588.5" y="69" font-size="10.5" fill="#ff0000" stroke="#ff0000" stroke-width="0.3" text-anchor="start" textLength="34" lengthAdjust="spacingAndGlyphs" >技术规范:</text>
<text x="590" y="83.5" font-size="10.5" fill="#ff0000" stroke="#ff0000" stroke-width="0.3" text-anchor="start" textLength="51" lengthAdjust="spacingAndGlyphs" >1、公称通径:2</text>
<text x="641.5" y="81" font-size="6.5" fill="#ff0000" stroke="#ff0000" stroke-width="0.3" text-anchor="start" textLength="9.5" lengthAdjust="spacingAndGlyphs" >9/16</text>
<text x="652" y="83.5" font-size="10.5" fill="#ff0000" stroke="#ff0000" stroke-width="0.3" text-anchor="start" textLength="29" lengthAdjust="spacingAndGlyphs" >in(φ65)</text>
<text x="588.5" y="97" font-size="10.5" fill="#ff0000" stroke="#ff0000" stroke-width="0.3" text-anchor="start" textLength="107" lengthAdjust="spacingAndGlyphs" >2、公称压力: 5000psi(35Mpa)</text>
<text x="588.5" y="110.5" font-size="10.5" fill="#ff0000" stroke="#ff0000" stroke-width="0.3" text-anchor="start" textLength="76.5" lengthAdjust="spacingAndGlyphs" >3、规范级别: PSL1-3</text>
<text x="677.5" y="110.5" font-size="10.5" fill="#ff0000" stroke="#ff0000" stroke-width="0.3" text-anchor="start" textLength="64.5" lengthAdjust="spacingAndGlyphs" >4、性能级别: PR1</text>
<text x="588.5" y="125.5" font-size="10.5" fill="#ff0000" stroke="#ff0000" stroke-width="0.3" text-anchor="start" textLength="72.5" lengthAdjust="spacingAndGlyphs" >5、温度级别: P、U</text>
<text x="677.5" y="125.5" font-size="10.5" fill="#ff0000" stroke="#ff0000" stroke-width="0.3" text-anchor="start" textLength="60.5" lengthAdjust="spacingAndGlyphs" >6、材料级别: EE</text>
<text x="752" y="69" font-size="10.5" fill="#ff0000" stroke="#ff0000" stroke-width="0.3" text-anchor="start" textLength="30" lengthAdjust="spacingAndGlyphs" >技术要求:</text>
<text x="756" y="80.7" font-size="9.6" fill="#ff0000" stroke="#ff0000" stroke-width="0.3" text-anchor="start" textLength="169" lengthAdjust="spacingAndGlyphs" >1. 应符合标准API Spec 6A-2004 ISO10423:2003要求;</text>
<text x="756" y="95.2" font-size="9.6" fill="#ff0000" stroke="#ff0000" stroke-width="0.3" text-anchor="start" textLength="274.5" lengthAdjust="spacingAndGlyphs" >2. 阀壳试验压力52Mpa, 升压至规定压力3min, 降压至0, 再升压至52Mpa, 稳压15min;</text>
<text x="756" y="108.2" font-size="9.6" fill="#ff0000" stroke="#ff0000" stroke-width="0.3" text-anchor="start" textLength="141" lengthAdjust="spacingAndGlyphs" >3. 第三次试验压力为35Mpa, 稳压至少15min</text>
<text x="756" y="122.2" font-size="9.6" fill="#ff0000" stroke="#ff0000" stroke-width="0.3" text-anchor="start" textLength="101" lengthAdjust="spacingAndGlyphs" >4. 整装时注意检查图示方向一致;</text>
<text x="756" y="135.2" font-size="9.6" fill="#ff0000" stroke="#ff0000" stroke-width="0.3" text-anchor="start" textLength="198" lengthAdjust="spacingAndGlyphs" >5. 标识应符合API Spec 6A-2004 ISO10423:2003中的8.1.2要求;</text>
</g>
<g id="valve" fill="none">
<clipPath id="h1"><polygon points="321.5,153 324.5,153 324.5,160 330,160.5 334.5,163.5 334.5,169.5 321.5,169.5"/></clipPath>
<path clip-path="url(#h1)" d="M304.5 169.5 L321.0 153 M307.5 169.5 L324.0 153 M310.5 169.5 L327.0 153 M313.5 169.5 L330.0 153 M316.5 169.5 L333.0 153 M319.5 169.5 L336.0 153 M322.5 169.5 L339.0 153 M325.5 169.5 L342.0 153 M328.5 169.5 L345.0 153 M331.5 169.5 L348.0 153 M334.5 169.5 L351.0 153" stroke="#00ffff" stroke-width="1"/>
<clipPath id="h2"><polygon points="327,170 341.5,170 341.5,188.5 327,188.5"/></clipPath>
<path clip-path="url(#h2)" d="M306.5 188.5 L325.0 170 M311.5 188.5 L330.0 170 M317.5 188.5 L336.0 170 M323.5 188.5 L342.0 170 M328.5 188.5 L347.0 170 M334.5 188.5 L353.0 170 M339.5 188.5 L358.0 170" stroke="#00ffff" stroke-width="1"/>
<clipPath id="rim"><path d="M410 170.5 H422 L427.5 175.5 V182.5 L422 187.5 H410 L404.5 182.5 V175.5 Z"/></clipPath>
<path clip-path="url(#rim)" d="M398 190 L423 165 M407 190 L432 165 M416 190 L441 165" stroke="#00ffff" stroke-width="1"/>
<clipPath id="h4"><polygon points="317.5,157 321,157 321,172.5 325,172.5 325,188.5 326.5,188.5 326.5,225.5 333.5,225.5 333.5,236 326.5,236 326.5,266.3 317.5,266.3"/></clipPath>
<path clip-path="url(#h4)" d="M204.0 157 L313.3 266.3 M211.0 157 L320.3 266.3 M217.0 157 L326.3 266.3 M224.0 157 L333.3 266.3 M231.0 157 L340.3 266.3 M237.0 157 L346.3 266.3 M244.0 157 L353.3 266.3 M250.0 157 L359.3 266.3 M257.0 157 L366.3 266.3 M264.0 157 L373.3 266.3 M270.0 157 L379.3 266.3 M277.0 157 L386.3 266.3 M283.0 157 L392.3 266.3 M290.0 157 L399.3 266.3 M297.0 157 L406.3 266.3 M303.0 157 L412.3 266.3 M310.0 157 L419.3 266.3 M316.0 157 L425.3 266.3 M323.0 157 L432.3 266.3 M330.0 157 L439.3 266.3" stroke="#00ffff" stroke-width="1"/>
<clipPath id="h5"><polygon points="339.3,192.5 349,192.5 351.5,195 351.5,226 339.3,226"/></clipPath>
<path clip-path="url(#h5)" d="M305.0 226 L338.5 192.5 M311.0 226 L344.5 192.5 M318.0 226 L351.5 192.5 M324.0 226 L357.5 192.5 M330.0 226 L363.5 192.5 M337.0 226 L370.5 192.5 M343.0 226 L376.5 192.5 M349.0 226 L382.5 192.5" stroke="#00ffff" stroke-width="1"/>
<clipPath id="h6"><polygon points="339.3,236 351.5,236 351.5,341 339.5,341 339.5,266.5 327.7,266.5 326.5,258 326.5,249 339.3,249"/></clipPath>
<path clip-path="url(#h6)" d="M219.0 341 L324.0 236 M223.0 341 L328.0 236 M228.0 341 L333.0 236 M232.0 341 L337.0 236 M236.0 341 L341.0 236 M240.0 341 L345.0 236 M245.0 341 L350.0 236 M249.0 341 L354.0 236 M253.0 341 L358.0 236 M258.0 341 L363.0 236 M262.0 341 L367.0 236 M266.0 341 L371.0 236 M271.0 341 L376.0 236 M275.0 341 L380.0 236 M279.0 341 L384.0 236 M283.0 341 L388.0 236 M288.0 341 L393.0 236 M292.0 341 L397.0 236 M296.0 341 L401.0 236 M301.0 341 L406.0 236 M305.0 341 L410.0 236 M309.0 341 L414.0 236 M314.0 341 L419.0 236 M318.0 341 L423.0 236 M322.0 341 L427.0 236 M326.0 341 L431.0 236 M331.0 341 L436.0 236 M335.0 341 L440.0 236 M339.0 341 L444.0 236 M344.0 341 L449.0 236 M348.0 341 L453.0 236" stroke="#00ffff" stroke-width="1"/>
<clipPath id="h7"><polygon points="327,192.5 338.5,192.5 338.5,212.5 327,212.5"/></clipPath>
<path clip-path="url(#h7)" d="M305.5 212.5 L325.5 192.5 M308.5 212.5 L328.5 192.5 M311.5 212.5 L331.5 192.5 M314.5 212.5 L334.5 192.5 M316.5 212.5 L336.5 192.5 M319.5 212.5 L339.5 192.5 M322.5 212.5 L342.5 192.5 M324.5 212.5 L344.5 192.5 M327.5 212.5 L347.5 192.5 M330.5 212.5 L350.5 192.5 M332.5 212.5 L352.5 192.5 M335.5 212.5 L355.5 192.5 M338.5 212.5 L358.5 192.5" stroke="#00ffff" stroke-width="1"/>
<rect x="328.5" y="193" width="6" height="5.5" fill="#000" stroke="none"/>
<clipPath id="h8"><polygon points="317.8,312 321.5,312 324,316 325.4,316 325.4,338.7 317.8,338.7"/></clipPath>
<path clip-path="url(#h8)" d="M289.3 338.7 L316.0 312 M293.3 338.7 L320.0 312 M295.3 338.7 L322.0 312 M299.3 338.7 L326.0 312 M301.3 338.7 L328.0 312 M305.3 338.7 L332.0 312 M307.3 338.7 L334.0 312 M311.3 338.7 L338.0 312 M313.3 338.7 L340.0 312 M317.3 338.7 L344.0 312 M319.3 338.7 L346.0 312 M323.3 338.7 L350.0 312" stroke="#00ffff" stroke-width="1"/>
<clipPath id="h9"><polygon points="325.4,316 338.4,316 338.4,349 345.8,349 345.5,362 361.5,362 361.5,384.2 366.8,384.2 366.8,389.8 373.7,389.8 376.5,393.7 376.5,455.5 363,455.5 363,426 359.7,424 359.7,413 355,411 355,407.5 345.6,407.5 345.6,386.3 321.8,386.3 317.8,382.5 317.8,375 323.3,375 323.3,345.5 325.4,345.5"/></clipPath>
<path clip-path="url(#h9)" d="M176.5 455.5 L316.0 316 M185.5 455.5 L325.0 316 M194.5 455.5 L334.0 316 M203.5 455.5 L343.0 316 M212.5 455.5 L352.0 316 M221.5 455.5 L361.0 316 M229.5 455.5 L369.0 316 M238.5 455.5 L378.0 316 M247.5 455.5 L387.0 316 M256.5 455.5 L396.0 316 M265.5 455.5 L405.0 316 M274.5 455.5 L414.0 316 M283.5 455.5 L423.0 316 M292.5 455.5 L432.0 316 M301.5 455.5 L441.0 316 M310.5 455.5 L450.0 316 M318.5 455.5 L458.0 316 M327.5 455.5 L467.0 316 M336.5 455.5 L476.0 316 M345.5 455.5 L485.0 316 M354.5 455.5 L494.0 316 M363.5 455.5 L503.0 316 M372.5 455.5 L512.0 316" stroke="#00ffff" stroke-width="1"/>
<clipPath id="h10"><polygon points="317.8,338.7 323.9,338.7 323.9,346 317.8,346"/></clipPath>
<path clip-path="url(#h10)" d="M309.0 346 L316.3 338.7 M312.0 346 L319.3 338.7 M315.0 346 L322.3 338.7 M318.0 346 L325.3 338.7 M321.0 346 L328.3 338.7" stroke="#00ffff" stroke-width="1"/>
<rect x="318" y="346" width="5.5" height="27" fill="#00ffff" stroke="none"/>
<path d="M319.5 348 V373 M321.5 348 V373" stroke="#000" stroke-dasharray="1 1.5"/>
<clipPath id="h11"><polygon points="345.6,416 347,416 350,418 356,416 359.7,424 363,426 363,455.6 363.5,466 366,467 372.8,474.5 406.2,474.5 411,469.5 433.7,469.5 433.7,472 452.5,472 452.5,492.3 340.5,492.3 340.5,484.5 326.8,484.5 326.8,474.3 332.7,474.3 335.3,472.7 335.3,457.4 341.7,457.4 345.6,453.4"/></clipPath>
<path clip-path="url(#h11)" d="M249.7 492.3 L326.0 416 M260.7 492.3 L337.0 416 M271.7 492.3 L348.0 416 M282.7 492.3 L359.0 416 M293.7 492.3 L370.0 416 M304.7 492.3 L381.0 416 M315.7 492.3 L392.0 416 M326.7 492.3 L403.0 416 M337.7 492.3 L414.0 416 M348.7 492.3 L425.0 416 M359.7 492.3 L436.0 416 M370.7 492.3 L447.0 416 M381.7 492.3 L458.0 416 M392.7 492.3 L469.0 416 M403.7 492.3 L480.0 416 M414.7 492.3 L491.0 416 M425.7 492.3 L502.0 416 M436.7 492.3 L513.0 416 M447.7 492.3 L524.0 416" stroke="#ffff00" stroke-width="1"/>
<clipPath id="h12"><polygon points="304.5,564.2 325.7,564.2 325.7,560 323.9,560 323.9,553.7 337,553.7 337,546.7 452.5,546.7 452.5,567.9 433.7,567.9 433.7,569.7 411.4,569.7 405.8,564.5 372.8,564.5 366,570.9 366,582.3 304.5,582.3"/></clipPath>
<path clip-path="url(#h12)" d="M269.7 582.3 L305.3 546.7 M280.7 582.3 L316.3 546.7 M291.7 582.3 L327.3 546.7 M302.7 582.3 L338.3 546.7 M313.7 582.3 L349.3 546.7 M324.7 582.3 L360.3 546.7 M335.7 582.3 L371.3 546.7 M346.7 582.3 L382.3 546.7 M357.7 582.3 L393.3 546.7 M368.7 582.3 L404.3 546.7 M379.7 582.3 L415.3 546.7 M390.7 582.3 L426.3 546.7 M401.7 582.3 L437.3 546.7 M412.7 582.3 L448.3 546.7 M423.7 582.3 L459.3 546.7 M434.7 582.3 L470.3 546.7 M445.7 582.3 L481.3 546.7" stroke="#ffff00" stroke-width="1"/>
<clipPath id="h13"><polygon points="411.5,418.5 452.5,418.5 452.5,428.5 411.5,428.5"/></clipPath>
<path clip-path="url(#h13)" d="M401.5 428.5 L411.5 418.5 M412.5 428.5 L422.5 418.5 M423.5 428.5 L433.5 418.5 M434.5 428.5 L444.5 418.5 M445.5 428.5 L455.5 418.5" stroke="#00ffff" stroke-width="1"/>
<clipPath id="h14"><polygon points="411.5,453.5 452.5,453.5 452.5,463.8 433.7,463.8 433.7,469 411.5,469"/></clipPath>
<path clip-path="url(#h14)" d="M394.0 469 L409.5 453.5 M405.0 469 L420.5 453.5 M416.0 469 L431.5 453.5 M427.0 469 L442.5 453.5 M438.0 469 L453.5 453.5 M449.0 469 L464.5 453.5" stroke="#00ffff" stroke-width="1"/>
<clipPath id="h15"><polygon points="411.5,574.6 452.5,574.6 452.5,585.3 411.5,585.3"/></clipPath>
<path clip-path="url(#h15)" d="M398.7 585.3 L409.4 574.6 M409.7 585.3 L420.4 574.6 M420.7 585.3 L431.4 574.6 M431.7 585.3 L442.4 574.6 M442.7 585.3 L453.4 574.6" stroke="#00ffff" stroke-width="1"/>
<clipPath id="h16"><polygon points="411.5,569.7 433.7,569.7 433.7,574.6 411.5,574.6"/></clipPath>
<path clip-path="url(#h16)" d="M409.4 574.6 L414.3 569.7 M420.4 574.6 L425.3 569.7 M431.4 574.6 L436.3 569.7" stroke="#00ffff" stroke-width="1"/>
<clipPath id="h17"><polygon points="411.5,610.2 452.5,610.2 452.5,620.3 411.5,620.3"/></clipPath>
<path clip-path="url(#h17)" d="M396.7 620.3 L406.8 610.2 M407.7 620.3 L417.8 610.2 M418.7 620.3 L428.8 610.2 M429.7 620.3 L439.8 610.2 M440.7 620.3 L450.8 610.2 M451.7 620.3 L461.8 610.2" stroke="#00ffff" stroke-width="1"/>
<clipPath id="gatec"><path clip-rule="evenodd" d="M304.5 480.5 H321.6 L322.7 495 L319.8 543.3 L318.7 556.3 H304.5 Z M316.2 499.5 Q316.5 497.3 318.5 497.3 Q320.8 497.3 320.8 499.5 L319.4 540.5 Q319.2 542.8 316.8 542.8 Q314.3 542.8 314.3 540.5 Z"/></clipPath>
<path clip-path="url(#gatec)" d="M215 560 L305 470 M226 560 L316 470 M237 560 L327 470 M248 560 L338 470 M259 560 L349 470 M270 560 L360 470 M281 560 L371 470 M292 560 L382 470 M303 560 L393 470" stroke="#00ffff" stroke-width="1"/>
<clipPath id="h19"><polygon points="322.7,485 340.5,485 340.5,492.3 322.7,492.3"/></clipPath>
<path clip-path="url(#h19)" d="M314.0 485 L321.3 492.3 M317.0 485 L324.3 492.3 M320.0 485 L327.3 492.3 M323.0 485 L330.3 492.3 M326.0 485 L333.3 492.3 M329.0 485 L336.3 492.3 M332.0 485 L339.3 492.3 M335.0 485 L342.3 492.3 M338.0 485 L345.3 492.3" stroke="#00ffff" stroke-width="1"/>
<clipPath id="h20"><polygon points="321,546.5 337,546.5 337,553.7 321,553.7"/></clipPath>
<path clip-path="url(#h20)" d="M311.5 546.5 L318.7 553.7 M314.5 546.5 L321.7 553.7 M316.5 546.5 L323.7 553.7 M318.5 546.5 L325.7 553.7 M321.5 546.5 L328.7 553.7 M324.5 546.5 L331.7 553.7 M326.5 546.5 L333.7 553.7 M328.5 546.5 L335.7 553.7 M331.5 546.5 L338.7 553.7 M334.5 546.5 L341.7 553.7 M336.5 546.5 L343.7 553.7" stroke="#00ffff" stroke-width="1"/>
<clipPath id="h21"><polygon points="347,407.5 355,407.5 355,416 347,416"/></clipPath>
<path clip-path="url(#h21)" d="M338.0 416 L346.5 407.5 M340.0 416 L348.5 407.5 M342.0 416 L350.5 407.5 M344.0 416 L352.5 407.5 M346.0 416 L354.5 407.5 M348.0 416 L356.5 407.5 M350.0 416 L358.5 407.5 M352.0 416 L360.5 407.5 M354.0 416 L362.5 407.5" stroke="#00ffff" stroke-width="1"/>
<path d="M304.5 169.5 H189.5 A9.5 9.5 0 0 0 189.5 188.5 H304.5" stroke="#ffffff" stroke-width="1" />
<path d="M283.5 152.5 H324.5 M282.5 152.5 V160.5 M283 154.5 H317.5 M283 155.5 H317.5 M282.5 157.5 H303.5 M278 160.5 H304.5" stroke="#ffffff" stroke-width="1" />
<path d="M272.5 169.5 V165 Q273 161.5 278.5 160.5 M288.5 169.5 V163.5 M285.5 161 Q286.5 163 288.5 163.5 Q291.5 163.5 295 161" stroke="#ffffff" stroke-width="1" />
<path d="M281.5 188.5 V192.5" stroke="#ffffff" stroke-width="1" />
<path d="M304.5 192.5 H259 Q256.5 192.5 256.5 195 V345 Q256.5 347.5 259 347.5 H304.5 M258 348.5 H304.5" stroke="#ffffff" stroke-width="1" />
<path d="M304.5 268.5 H265.5 Q262.5 268.5 262.5 271.5 V312.5 Q262.5 315.5 265.5 315.5 H284.5 L288.5 312.5 L291.5 310.5" stroke="#ffffff" stroke-width="1" />
<path d="M274.5 268.5 Q272.5 269.5 272.5 272 V312 Q272.5 314.5 274.5 315.5 M272.5 286 Q276.5 291.5 272.5 297" stroke="#ffffff" stroke-width="1" />
<path d="M290.5 268.5 V298.5 L292.5 301 H316 L317.5 298.5 M293.5 301 V307.5 M313.5 301 V307.5 M290.5 308 H316.5 M293.5 307.5 L290.5 308.5 M291.5 310.5 H318 M290.5 308.5 L291.5 310.5 M294.5 312.5 Q297 314 299 312.5" stroke="#ffffff" stroke-width="1" />
<path d="M262.5 351.5 H303.5 M262.5 351 V362" stroke="#ffffff" stroke-width="1" />
<path d="M304.5 362.5 H250 Q247 362.5 247 365 V384.5 H239.5 V390.5 M249 363.5 H304.5 M251.5 364 V384.5 H298.8 V364" stroke="#ffffff" stroke-width="1" />
<path d="M233 390.5 H304.5 M234 392.5 H304.5 M234 392.5 Q231.5 392.5 231.5 395 V460 Q231.5 462.7 234.5 462.7 H304.5 M236 466 H304.5 M241 467.7 H304.5" stroke="#ffffff" stroke-width="1" />
<path d="M241.5 467.7 V582.3 H366" stroke="#ffffff" stroke-width="1" />
<path d="M196.5 470.2 L201.5 474.5 H235.5 Q241 474 241.5 468.2 M201.5 474.5 V564.7 M196.5 569.8 L201.5 564.7 H235.5 Q241 565 241.5 570.5" stroke="#ffffff" stroke-width="1" />
<path d="M158 418.5 H194 Q196.5 418.5 196.5 421 V620.5 H175 M158 418.5 Q155.5 418.5 155.5 421 V620 M157.5 419 V620.5" stroke="#ffffff" stroke-width="1" />
<path d="M324.5 152.5 V160 Q331 160 334.5 163.5 V169.5 H321.5 V153 M317.5 153 H319.5 V157 H317.5" stroke="#ffffff" stroke-width="1" />
<path d="M326.5 169.5 H341.5 V188.5 H326.5 Z M325 169.5 V188.5 M320.5 169.5 H324.5 V172.5 H320.5 Z" stroke="#ffffff" stroke-width="1" />
<path d="M341.5 169.5 H418.5 M341.5 188.5 H418.5 M369 171.5 H396 M396 172.5 H405.5 M371 186.5 H397.5 M397.5 185.5 H413.5" stroke="#ffffff" stroke-width="1" />
<path d="M410 170.5 H422 L427.5 175.5 V182.5 L422 187.5 H410 L404.5 182.5 V175.5 Z" stroke="#ffffff" stroke-width="1" />
<path d="M326.5 192.5 H349 Q351.5 192.5 351.5 195 V341 M326.5 188.5 V225.5 M326.5 236 V265 M328.5 193 H334.5 V198.5 H328.5 Z" stroke="#ffffff" stroke-width="1" />
<path d="M326.5 212.5 H339.3 V225.5 H326.5 M326.5 236 H339.3 V249 H326.5 M339.3 192.5 V212.5 M339.3 225.5 V236 M339.3 249 V266.5" stroke="#ffffff" stroke-width="1" />
<path d="M326.5 212.5 L339.5 225.5 M339.5 212.5 L326.5 225.5 M326.5 236.5 L339 249 M339.5 236.5 L327 249" stroke="#00ff00" stroke-width="1" />
<path d="M333.5 225.5 H338 V235.5 H333.5 Z M339 227 H344 V235.5 H339 Z M345 227 H351.5 V234.5 H345 Z M351.5 225.5 H353.7 V235.5 H351.5 M353.7 227.7 H360 Q363.3 228 363.3 230.7 Q363.3 233.5 360 233.7 H353.7" stroke="#ffffff" stroke-width="1" />
<path d="M345 226.5 H351.5 M345 235 H351.5" stroke="#00ff00" stroke-width="1" />
<path d="M323.5 257.5 H326.5 M323.5 257.5 V260 H326.5" stroke="#ffffff" stroke-width="1" />
<circle cx="327.4" cy="265.3" r="1" stroke="#ffffff"/>
<path d="M317.5 266.5 H336.5 Q339.5 266.5 339.5 269.5 V315.5 H323.7 V314 L319 310.6 L316.5 310" stroke="#ffffff" stroke-width="1" />
<ellipse cx="334.5" cy="291.5" rx="2.5" ry="5" stroke="#ffffff"/>
<path d="M317.5 266 V298.5 M317.5 310 V444.8" stroke="#ffffff" stroke-width="1" />
<path d="M324.5 316 V339.5 M338.9 316 V340 M339 340.8 H351.5 V348.6 H339 Z M339 342.5 H351.5 M339 347 H351.5 M339 348.6 H344.2 L345.5 350.4 V362 H359.4 Q361.5 362 361.5 364.2 V384.2 H366.8 V389.8 H373.7 L376.5 393.7 V455" stroke="#ffffff" stroke-width="1" />
<path d="M323.3 345.5 V375 M317.8 382.5 L321.8 386.3 H345.6 V453.4 L341.7 457.4 H321.6 M335.3 457.4 V472.7 L332.7 474.3 H326.8" stroke="#ffffff" stroke-width="1" />
<path d="M317.8 407.8 H346.3 M317.8 410.8 H346.3 M317.8 415.2 H346" stroke="#ffffff" stroke-width="1" />
<circle cx="351.5" cy="411.8" r="2.3" stroke="#ffffff"/>
<path d="M355 411 L359 413 V424 M359.7 424 L363 426" stroke="#ffffff" stroke-width="1" />
<circle cx="363" cy="425" r="1.3" stroke="#ffffff"/>
<path d="M304.5 444.8 H316.5 M304.5 447.5 H316.5 L321 452 M303 452.5 H321 M321.6 452.5 V484 M326.5 457.4 V484.5 M303 478.5 H321 M303 480.5 H321" stroke="#ffffff" stroke-width="1" />
<path d="M296 462.5 H304.5 M296 465.5 H304.5 M296 467.5 H304.5" stroke="#ffffff" stroke-width="1" />
<path d="M363.5 455.6 V463 Q364 466 367 466 H373 Q376 466 376.2 463 V455.6" stroke="#ffffff" stroke-width="1" />
<path d="M364 466.7 Q366 474.5 372.8 474.5 H406.2 L411 469.5" stroke="#ffffff" stroke-width="1" />
<path d="M413 418.5 H450.5 Q452.5 418.5 452.5 420.5 V620 M450.5 492.5 V546.5 M413 418.5 Q411.5 418.5 411.5 420.5 V469.5 M411.5 428.5 H452.5 M411.5 453.5 H452.5" stroke="#ffffff" stroke-width="1" />
<path d="M433.7 463.8 H450.5 V472 H433.7 Z M450.5 472.5 H452.5" stroke="#ffffff" stroke-width="1" />
<path d="M452.5 477.5 H450 Q446.5 478 446.5 482.5 Q446.5 487.5 450 488 H452.5 M452.5 551.5 H450 Q446.5 551.5 446.5 556.5 Q446.5 561.5 450 561.5 H452.5" stroke="#ffffff" stroke-width="1" />
<path d="M340 492.5 H450.5 M320.6 546.5 H450.5" stroke="#ffffff" stroke-width="1" />
<path d="M322.7 484.5 H340.5 M340.5 484.5 L341 495 L339.6 517.3 L337.8 536.8 L337.5 546.3 M322.7 484.5 V492.3 H340.5" stroke="#ffffff" stroke-width="1" />
<path d="M320.6 546.3 V551.6 L323.9 553.5 H337 V546.5 M323.9 553.5 V560 H325.7 V564.2 H304.5 M330 548 H337 V550.7 H330 Z" stroke="#ffffff" stroke-width="1" />
<path d="M316.2 499.5 Q316.5 497.3 318.5 497.3 Q320.8 497.3 320.8 499.5 L319.4 540.5 Q319.2 542.8 316.8 542.8 Q314.3 542.8 314.3 540.5 Z" stroke="#ffffff" stroke-width="1" />
<path d="M321.6 484 L322.7 495 L319.8 543.3 L318.7 556.3 H304.5" stroke="#ffffff" stroke-width="1" />
<path d="M366 582.3 V571 Q366.5 564.5 372.8 564.5 H405.8 L411.4 570" stroke="#ffffff" stroke-width="1" />
<path d="M411.5 570 V618.5 Q411.5 620.5 413.5 620.5 H450.5 Q452.5 620.5 452.5 618.5 M411.5 585.5 H452.5 M411.5 610.5 H452.5" stroke="#ffffff" stroke-width="1" />
<path d="M433.7 567.9 H450.5 V574.6 H433.7 Z" stroke="#ffffff" stroke-width="1" />
<path d="M314.5 153 V300.5 M317.5 153 V266 M292.5 269 V300.5" stroke="#00ff00" stroke-width="1" />
<path d="M319.5 155 V170" stroke="#008800" stroke-width="1" />
<path d="M337.5 192.5 V211.5 M339.5 192.5 V211.5" stroke="#00ff00" stroke-width="1" />
<path d="M323.5 320.5 V337.5 M325.5 317 V337.5 M337.5 316.5 V339 M339.3 340.5 H351.5" stroke="#00ff00" stroke-width="1" />
<path d="M363 426.5 V455.6 H376.5" stroke="#00ff00" stroke-width="1" />
<path d="M411 469 H433.7 M433.7 463.5 H450.5 M433.7 472.3 H450.5" stroke="#00ff00" stroke-width="1" />
<path d="M411.4 569.5 H433.7 M433.7 567.5 H450.5 M433.7 575 H450.5" stroke="#00ff00" stroke-width="1" />
<path d="M327 486.5 H337.5 M324 552.5 H335" stroke="#00ff00" stroke-width="1" />
<path d="M304.5 140 V185 M304.5 195 V216 M304.5 226 V329 M304.5 334 V355.5 M304.5 362 V465.5 M304.5 476 V606" stroke="#ff0000" stroke-width="1" />
<path d="M174 179.5 H274 M284 179.5 H296 M306 179.5 H326 M336 179.5 H436.5" stroke="#ff0000" stroke-width="1" />
<path d="M189.5 162 V197 M418.5 162.5 V197 M276.5 189 V205 M332.5 188.5 V203.5" stroke="#ff0000" stroke-width="1" />
<path d="M269 291.5 H280 M328 291.5 H342 M334.5 283 V300" stroke="#ff0000" stroke-width="1" />
<path d="M334 231.5 H364 M335 344.5 H354.5 M320.5 366.5 V374.5 M320.5 345.5 V347.5" stroke="#ff0000" stroke-width="1" />
<path d="M140 519.5 H240.5 M250.5 519.5 H270.5 M280.5 519.5 H380 M390 519.5 H410 M420 519.5 H466" stroke="#ff0000" stroke-width="1" />
<path d="M150 441.5 H201 M150 598.5 H201 M407.5 441.5 H457.5 M408 598.5 H458" stroke="#ff0000" stroke-width="1" />
<path d="M361 460.5 H381 M410.5 468.5 H456 M442 483.5 H456 M442 556.5 H456 M431 571.5 H456" stroke="#ff0000" stroke-width="1" />
<path d="M450.5 492.5 H485 M450.5 546.5 H485 M481.5 492.5 V546.5 M480.5 495 V499.5 M482.5 495 V499.5 M480.5 539 V544.5 M482.5 539 V544.5" stroke="#ff00ff" stroke-width="1" />
<text transform="translate(473.5 529) rotate(-82)" font-size="7.5" fill="#ff00ff" stroke="#ff00ff" stroke-width="0.4" textLength="13.5" lengthAdjust="spacingAndGlyphs">Φ65</text>
<text transform="translate(469 514) rotate(-82)" font-size="6" fill="#ff00ff" stroke="#ff00ff" stroke-width="0.4" textLength="10" lengthAdjust="spacingAndGlyphs">°°</text>
<circle cx="474" cy="514.6" r="1.1" stroke="#ff00ff" stroke-width="0.8"/>
<path d="M180.5 118.5 V180 M427.5 120 V178 M181 124.5 H427.5 M181 123.5 H186 M181 125.5 H186 M422 123.5 H427 M422 125.5 H427" stroke="#ffff00" stroke-width="1" />
<path d="M121 152.5 H283.5 M125.5 152.5 V620.5 M121 620.5 H176 M124.5 154 V159 M126.5 154 V159 M124.5 614 V619 M126.5 614 V619" stroke="#ffff00" stroke-width="1" />
<path d="M155.5 519 V649 M452.5 519 V649 M156 644.5 H452.5 M156 643.5 H162 M156 645.5 H162 M446 643.5 H452 M446 645.5 H452" stroke="#ffff00" stroke-width="1" />
<text x="290" y="120" font-size="13" fill="#ffff00" stroke="#ffff00" stroke-width="0.3" text-anchor="start" textLength="22" lengthAdjust="spacingAndGlyphs" >Φ300</text>
<text x="283" y="640" font-size="13.8" fill="#ffff00" stroke="#ffff00" stroke-width="0.3" text-anchor="start" textLength="33.5" lengthAdjust="spacingAndGlyphs" >422±2</text>
<text transform="translate(119.5 397) rotate(-90)" font-size="11.5" fill="#ffff00" stroke="#ffff00" stroke-width="0.35" textLength="25.5" lengthAdjust="spacingAndGlyphs">557.5</text>
<text transform="translate(136 400) rotate(-90)" font-size="11.5" fill="#ffff00" stroke="#ffff00" stroke-width="0.35" textLength="31" lengthAdjust="spacingAndGlyphs">(648.5)</text>
<path d="M326.7 165 L529.5 96.5" stroke="#ffff00" stroke-width="1" />
<path d="M529.5 96.5 H549.5" stroke="#ffff00" stroke-width="1" />
<rect x="325.7" y="164" width="2" height="2" fill="#ffff00" stroke="none"/>
<text x="534.2" y="93.0" font-family="Liberation Serif, serif" font-size="23.5" fill="#ffff00" stroke="none" textLength="5.5" lengthAdjust="spacingAndGlyphs">1</text>
<path d="M405.8 170.8 L527.5 127.5" stroke="#ffff00" stroke-width="1" />
<path d="M527.5 127.5 H551" stroke="#ffff00" stroke-width="1" />
<rect x="404.8" y="169.8" width="2" height="2" fill="#ffff00" stroke="none"/>
<text x="535.3" y="124.0" font-family="Liberation Serif, serif" font-size="23.5" fill="#ffff00" stroke="none" textLength="7.8" lengthAdjust="spacingAndGlyphs">2</text>
<path d="M325.3 188 L518.5 162.5" stroke="#ffff00" stroke-width="1" />
<path d="M518.5 162.5 H551" stroke="#ffff00" stroke-width="1" />
<rect x="324.3" y="187" width="2" height="2" fill="#ffff00" stroke="none"/>
<text x="535.3" y="159.0" font-family="Liberation Serif, serif" font-size="23.5" fill="#ffff00" stroke="none" textLength="7.8" lengthAdjust="spacingAndGlyphs">3</text>
<path d="M334.5 200.5 L398 200.5" stroke="#ffff00" stroke-width="1" />
<path d="M398 201.5 H551.5" stroke="#ffff00" stroke-width="1" />
<rect x="333.5" y="199.5" width="2" height="2" fill="#ffff00" stroke="none"/>
<text x="535.3" y="198.0" font-family="Liberation Serif, serif" font-size="23.5" fill="#ffff00" stroke="none" textLength="7.8" lengthAdjust="spacingAndGlyphs">4</text>
<path d="M324.5 202.7 L528.5 236.5" stroke="#ffff00" stroke-width="1" />
<path d="M528.5 236.5 H551" stroke="#ffff00" stroke-width="1" />
<rect x="323.5" y="201.7" width="2" height="2" fill="#ffff00" stroke="none"/>
<text x="535.3" y="233.0" font-family="Liberation Serif, serif" font-size="23.5" fill="#ffff00" stroke="none" textLength="7.8" lengthAdjust="spacingAndGlyphs">5</text>
<path d="M332 218.6 L527.5 274.5" stroke="#ffff00" stroke-width="1" />
<path d="M527.5 274.5 H551" stroke="#ffff00" stroke-width="1" />
<rect x="331" y="217.6" width="2" height="2" fill="#ffff00" stroke="none"/>
<text x="535.3" y="271.0" font-family="Liberation Serif, serif" font-size="23.5" fill="#ffff00" stroke="none" textLength="7.8" lengthAdjust="spacingAndGlyphs">6</text>
<path d="M349 240 L528 317.5" stroke="#ffff00" stroke-width="0.96" />
<path d="M349 240 L528 317.5" stroke="#ffff00" stroke-width="0.96" />
<path d="M349 240 L528 317.5" stroke="#ffff00" stroke-width="0.96" />
<path d="M528 317.5 H551" stroke="#ffff00" stroke-width="1" />
<rect x="348" y="239" width="2" height="2" fill="#ffff00" stroke="none"/>
<text x="535.3" y="314.0" font-family="Liberation Serif, serif" font-size="23.5" fill="#ffff00" stroke="none" textLength="7.8" lengthAdjust="spacingAndGlyphs">7</text>
<path d="M322.3 248.4 L528 355.5" stroke="#ffff00" stroke-width="0.93" />
<path d="M322.3 248.4 L528 355.5" stroke="#ffff00" stroke-width="0.93" />
<path d="M322.3 248.4 L528 355.5" stroke="#ffff00" stroke-width="0.93" />
<path d="M528 355.5 H551" stroke="#ffff00" stroke-width="1" />
<rect x="321.3" y="247.4" width="2" height="2" fill="#ffff00" stroke="none"/>
<text x="535.3" y="352.0" font-family="Liberation Serif, serif" font-size="23.5" fill="#ffff00" stroke="none" textLength="7.8" lengthAdjust="spacingAndGlyphs">8</text>
<path d="M345.8 304.2 L528 390.5" stroke="#ffff00" stroke-width="0.94" />
<path d="M345.8 304.2 L528 390.5" stroke="#ffff00" stroke-width="0.94" />
<path d="M345.8 304.2 L528 390.5" stroke="#ffff00" stroke-width="0.94" />
<path d="M528 390.5 H551" stroke="#ffff00" stroke-width="1" />
<rect x="344.8" y="303.2" width="2" height="2" fill="#ffff00" stroke="none"/>
<text x="535.3" y="387.0" font-family="Liberation Serif, serif" font-size="23.5" fill="#ffff00" stroke="none" textLength="7.8" lengthAdjust="spacingAndGlyphs">9</text>
<path d="M351.1 344.4 L528 421.5" stroke="#ffff00" stroke-width="0.96" />
<path d="M351.1 344.4 L528 421.5" stroke="#ffff00" stroke-width="0.96" />
<path d="M351.1 344.4 L528 421.5" stroke="#ffff00" stroke-width="0.96" />
<path d="M528 421.5 H551" stroke="#ffff00" stroke-width="1" />
<rect x="350.1" y="343.4" width="2" height="2" fill="#ffff00" stroke="none"/>
<text x="534.2" y="418.0" font-family="Liberation Serif, serif" font-size="23.5" fill="#ffff00" stroke="none" textLength="15" lengthAdjust="spacingAndGlyphs">10</text>
<path d="M362 366.5 L528 448.5" stroke="#ffff00" stroke-width="0.94" />
<path d="M362 366.5 L528 448.5" stroke="#ffff00" stroke-width="0.94" />
<path d="M362 366.5 L528 448.5" stroke="#ffff00" stroke-width="0.94" />
<path d="M528 448.5 H551" stroke="#ffff00" stroke-width="1" />
<rect x="361" y="365.5" width="2" height="2" fill="#ffff00" stroke="none"/>
<text x="534.2" y="445.0" font-family="Liberation Serif, serif" font-size="23.5" fill="#ffff00" stroke="none" textLength="15" lengthAdjust="spacingAndGlyphs">11</text>
<path d="M441.2 423.8 L528.5 477.5" stroke="#ffff00" stroke-width="0.89" />
<path d="M441.2 423.8 L528.5 477.5" stroke="#ffff00" stroke-width="0.89" />
<path d="M441.2 423.8 L528.5 477.5" stroke="#ffff00" stroke-width="0.89" />
<path d="M528.5 477.5 H551" stroke="#ffff00" stroke-width="1" />
<rect x="440.2" y="422.8" width="2" height="2" fill="#ffff00" stroke="none"/>
<text x="534.2" y="474.0" font-family="Liberation Serif, serif" font-size="23.5" fill="#ffff00" stroke="none" textLength="15" lengthAdjust="spacingAndGlyphs">12</text>
<path d="M320.7 341 L528.5 516.5" stroke="#ffff00" stroke-width="0.8" />
<path d="M320.7 341 L528.5 516.5" stroke="#ffff00" stroke-width="0.8" />
<path d="M320.7 341 L528.5 516.5" stroke="#ffff00" stroke-width="0.8" />
<path d="M528.5 516.5 H551" stroke="#ffff00" stroke-width="1" />
<rect x="319.7" y="340" width="2" height="2" fill="#ffff00" stroke="none"/>
<text x="534.2" y="513.0" font-family="Liberation Serif, serif" font-size="23.5" fill="#ffff00" stroke="none" textLength="15" lengthAdjust="spacingAndGlyphs">13</text>
<path d="M320.7 347 L528.5 552.5" stroke="#ffff00" stroke-width="0.75" />
<path d="M320.7 347 L528.5 552.5" stroke="#ffff00" stroke-width="0.75" />
<path d="M320.7 347 L528.5 552.5" stroke="#ffff00" stroke-width="0.75" />
<path d="M528.5 552.5 H551" stroke="#ffff00" stroke-width="1" />
<rect x="319.7" y="346" width="2" height="2" fill="#ffff00" stroke="none"/>
<text x="534.2" y="549.0" font-family="Liberation Serif, serif" font-size="23.5" fill="#ffff00" stroke="none" textLength="15" lengthAdjust="spacingAndGlyphs">14</text>
<path d="M320.7 360.3 L528.5 584.5" stroke="#ffff00" stroke-width="0.77" />
<path d="M320.7 360.3 L528.5 584.5" stroke="#ffff00" stroke-width="0.77" />
<path d="M320.7 360.3 L528.5 584.5" stroke="#ffff00" stroke-width="0.77" />
<path d="M528.5 584.5 H551" stroke="#ffff00" stroke-width="1" />
<rect x="319.7" y="359.3" width="2" height="2" fill="#ffff00" stroke="none"/>
<text x="534.2" y="581.0" font-family="Liberation Serif, serif" font-size="23.5" fill="#ffff00" stroke="none" textLength="15" lengthAdjust="spacingAndGlyphs">15</text>
<path d="M320.7 370.7 L528.5 617.5" stroke="#ffff00" stroke-width="0.8" />
<path d="M320.7 370.7 L528.5 617.5" stroke="#ffff00" stroke-width="0.8" />
<path d="M320.7 370.7 L528.5 617.5" stroke="#ffff00" stroke-width="0.8" />
<path d="M528.5 617.5 H551" stroke="#ffff00" stroke-width="1" />
<rect x="319.7" y="369.7" width="2" height="2" fill="#ffff00" stroke="none"/>
<text x="534.2" y="614.0" font-family="Liberation Serif, serif" font-size="23.5" fill="#ffff00" stroke="none" textLength="15" lengthAdjust="spacingAndGlyphs">16</text>
<path d="M351.5 415 L528.5 652.5" stroke="#ffff00" stroke-width="0.84" />
<path d="M351.5 415 L528.5 652.5" stroke="#ffff00" stroke-width="0.84" />
<path d="M351.5 415 L528.5 652.5" stroke="#ffff00" stroke-width="0.84" />
<path d="M528.5 652.5 H551" stroke="#ffff00" stroke-width="1" />
<rect x="350.5" y="414" width="2" height="2" fill="#ffff00" stroke="none"/>
<text x="534.2" y="649.0" font-family="Liberation Serif, serif" font-size="23.5" fill="#ffff00" stroke="none" textLength="15" lengthAdjust="spacingAndGlyphs">17</text>
<path d="M442 570.5 L528.5 691.5" stroke="#ffff00" stroke-width="0.85" />
<path d="M442 570.5 L528.5 691.5" stroke="#ffff00" stroke-width="0.85" />
<path d="M442 570.5 L528.5 691.5" stroke="#ffff00" stroke-width="0.85" />
<path d="M528.5 691.5 H551" stroke="#ffff00" stroke-width="1" />
<rect x="441" y="569.5" width="2" height="2" fill="#ffff00" stroke="none"/>
<text x="534.2" y="688.0" font-family="Liberation Serif, serif" font-size="23.5" fill="#ffff00" stroke="none" textLength="15" lengthAdjust="spacingAndGlyphs">18</text>
<path d="M339 488.6 L471 691.5" stroke="#ffff00" stroke-width="0.88" />
<path d="M339 488.6 L471 691.5" stroke="#ffff00" stroke-width="0.88" />
<path d="M339 488.6 L471 691.5" stroke="#ffff00" stroke-width="0.88" />
<path d="M471 691.5 H493" stroke="#ffff00" stroke-width="1" />
<rect x="338" y="487.6" width="2" height="2" fill="#ffff00" stroke="none"/>
<text x="476" y="688.0" font-family="Liberation Serif, serif" font-size="23.5" fill="#ffff00" stroke="none" textLength="15.2" lengthAdjust="spacingAndGlyphs">19</text>
<path d="M319.5 496.5 L419.5 691.5" stroke="#ffff00" stroke-width="0.93" />
<path d="M319.5 496.5 L419.5 691.5" stroke="#ffff00" stroke-width="0.93" />
<path d="M319.5 496.5 L419.5 691.5" stroke="#ffff00" stroke-width="0.93" />
<path d="M419.5 691.5 H441" stroke="#ffff00" stroke-width="1" />
<rect x="318.5" y="495.5" width="2" height="2" fill="#ffff00" stroke="none"/>
<text x="424.2" y="688.0" font-family="Liberation Serif, serif" font-size="23.5" fill="#ffff00" stroke="none" textLength="14.8" lengthAdjust="spacingAndGlyphs">20</text>
<path d="M342.3 574.6 L368.8 691.5" stroke="#ffff00" stroke-width="1" />
<path d="M368.8 691.5 H391" stroke="#ffff00" stroke-width="1" />
<rect x="341.3" y="573.6" width="2" height="2" fill="#ffff00" stroke="none"/>
<text x="375" y="688.0" font-family="Liberation Serif, serif" font-size="23.5" fill="#ffff00" stroke="none" textLength="14.3" lengthAdjust="spacingAndGlyphs">21</text>
<path d="M310.5 462 L316.9 691.5" stroke="#ffff00" stroke-width="1" />
<path d="M316.9 691.5 H339" stroke="#ffff00" stroke-width="1" />
<rect x="309.5" y="461" width="2" height="2" fill="#ffff00" stroke="none"/>
<text x="323.3" y="688.0" font-family="Liberation Serif, serif" font-size="23.5" fill="#ffff00" stroke="none" textLength="15.7" lengthAdjust="spacingAndGlyphs">22</text>
</g>
</svg>
</body></html>
